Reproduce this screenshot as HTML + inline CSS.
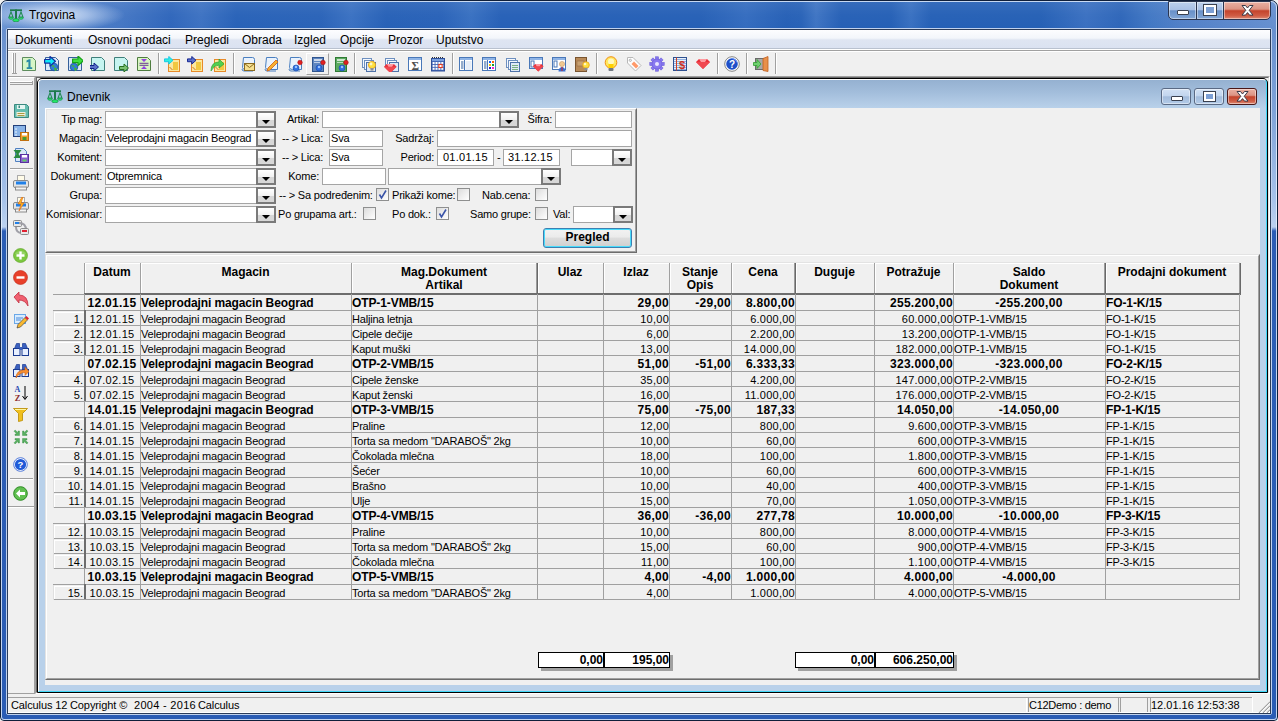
<!DOCTYPE html><html><head><meta charset="utf-8"><style>
*{box-sizing:border-box;margin:0;padding:0}
html,body{width:1278px;height:721px;overflow:hidden;background:#f2f2f2}
body{position:relative;font-family:"Liberation Sans",sans-serif;font-size:11px;color:#000}
.a{position:absolute}
.t{position:absolute;white-space:nowrap;line-height:12px}
.b{font-weight:bold;font-size:12px}
.in{position:absolute;background:#fff;border:1px solid #abadb3;border-color:#abadb3 #e3e9ef #e3e9ef #abadb3}
.in2{position:absolute;background:#fff;border:1px solid #a5a5a5}
.dd{position:absolute;width:20px;height:17px;border:2px solid #7a7a7a;background:linear-gradient(#fff,#f2f2f2 50%,#d6d6d6 51%,#d8d8d8)}
.dd:after{content:"";position:absolute;left:4px;top:7px;border-left:4px solid transparent;border-right:4px solid transparent;border-top:4px solid #000}
.cb{position:absolute;width:13px;height:13px;border:1px solid #8e8f8f;background:linear-gradient(135deg,#dcdcdc,#fff)}
.tb{position:absolute;width:16px;height:16px}
</style></head><body>
<div class="a" style="left:0;top:0;width:1278px;height:721px;border-radius:7px 7px 4px 4px;border:1px solid #0f1f3a;background:linear-gradient(90deg,#6d96d3 0,#5a88cc 20px,#4577c4 120px,#2f66bb 170px,#3d72c2 200px,#2862b8 235px,#2a63b8 320px,#3a71c2 350px,#2761b7 385px,#2962b8 440px,#3870c1 470px,#2660b7 500px,#2660b6 700px,#346cbf 745px,#2660b6 785px,#2862b7 800px,#3e74c3 815px,#2660b6 840px,#2560b6 890px,#3870c1 910px,#2560b6 930px,#2560b5 1040px,#3a70c1 1085px,#2e66b9 1120px,#4278c4 1150px,#5180c8 1180px,#6790d0 1278px)"></div>
<div class="a" style="left:1px;top:1px;width:1276px;height:28px;border-radius:6px 6px 0 0;background:linear-gradient(rgba(255,255,255,0.08),rgba(255,255,255,0.02) 50%,rgba(255,255,255,0) 100%)"></div>
<div class="a" style="left:0;top:0;width:200px;height:29px;border-radius:7px 0 0 0;background:radial-gradient(ellipse 70px 16px at 55px 15px,rgba(225,236,250,0.95) 0,rgba(200,218,244,0.7) 45%,rgba(160,190,235,0) 100%)"></div>
<div class="a" style="left:1px;top:29px;width:1276px;height:691px;background:linear-gradient(#678fce 0,#7ea2d8 80px,#a6c2ea 170px,#bcd2f0 198px,#2b5db5 202px,#2a5cb4 100%);border-radius:0 0 4px 4px"></div>
<div class="t" style="left:29px;top:8px;font-size:12px;line-height:14px;color:#000">Trgovina</div>
<div class="a" style="left:6px;top:28px;width:1266px;height:687px;border:1px solid #c0d2ee;border-radius:2px"></div>
<div class="a" style="left:7px;top:29px;width:1264px;height:685px;border:1px solid #2b3c59;background:#f0f0f0"></div>
<div class="a" style="left:1px;top:1px;width:1276px;height:719px;border:1px solid rgba(235,244,255,0.8);border-radius:6px 6px 3px 3px"></div>
<div class="a" style="left:8px;top:30px;width:1262px;height:19px;background:linear-gradient(#fdfdff 0,#f3f6fb 45%,#dfe5f2 55%,#dbe2f1 100%);border-bottom:1px solid #b9c1cf"></div>
<div class="a" style="left:8px;top:49px;width:1262px;height:1px;background:#fff"></div>
<div class="a" style="left:8px;top:50px;width:1262px;height:1px;background:#a0a0a0"></div>
<div class="a" style="left:8px;top:51px;width:1262px;height:1px;background:#fff"></div>
<div class="t" style="left:15px;top:33px;font-size:12px;line-height:14px">Dokumenti</div>
<div class="t" style="left:88px;top:33px;font-size:12px;line-height:14px">Osnovni podaci</div>
<div class="t" style="left:185px;top:33px;font-size:12px;line-height:14px">Pregledi</div>
<div class="t" style="left:242px;top:33px;font-size:12px;line-height:14px">Obrada</div>
<div class="t" style="left:294px;top:33px;font-size:12px;line-height:14px">Izgled</div>
<div class="t" style="left:340px;top:33px;font-size:12px;line-height:14px">Opcije</div>
<div class="t" style="left:388px;top:33px;font-size:12px;line-height:14px">Prozor</div>
<div class="t" style="left:436px;top:33px;font-size:12px;line-height:14px">Uputstvo</div>
<div class="a" style="left:8px;top:76px;width:1262px;height:1px;background:#a0a0a0"></div>
<div class="a" style="left:35px;top:76px;width:1235px;height:618px;border-top:1px solid #a0a0a0;border-left:1px solid #a0a0a0;border-right:1px solid #fff;border-bottom:1px solid #fff;background:#fff"></div>
<div class="a" style="left:36px;top:77px;width:1233px;height:616px;border-top:1px solid #696969;border-left:1px solid #696969;border-right:1px solid #e3e3e3;border-bottom:1px solid #fff;background:#f0f0f0"></div>
<div class="a" style="left:8px;top:77px;width:27px;height:617px;background:#f0f0f0;border-top:1px solid #fff;border-right:1px solid #a0a0a0;border-bottom:1px solid #a0a0a0"></div>
<div class="a" style="left:37px;top:78px;width:1231px;height:615px;border:1px solid #000;border-radius:5px 5px 0 0;background:#000"></div>
<div class="a" style="left:38px;top:79px;width:1229px;height:613px;border-top:1px solid #fff;border-left:1px solid #fff;border-right:1px solid #40d8f8;border-bottom:1px solid #40d8f8;border-radius:4px 4px 0 0;background:linear-gradient(#95b1d1 0,#a2bddb 12px,#b9d1ea 28px,#b9d1ea 100%)"></div>
<div class="t" style="left:67px;top:90px;font-size:12px;line-height:14px">Dnevnik</div>
<div class="a" style="left:45px;top:108px;width:1215px;height:577px;background:#f0f0f0"></div>
<div class="a" style="left:8px;top:694px;width:1262px;height:19px;background:#f0f0f0"></div>
<div class="a" style="left:8px;top:697px;width:1244px;height:1px;background:#a0a0a0"></div>
<div class="a" style="left:8px;top:712px;width:1262px;height:1px;background:#fff"></div>
<div class="a" style="left:1252px;top:697px;width:1px;height:15px;background:#fff"></div>
<div class="a" style="left:1026px;top:698px;width:1px;height:14px;background:#fff"></div>
<div class="a" style="left:1028px;top:698px;width:1px;height:14px;background:#a0a0a0"></div>
<div class="a" style="left:1118px;top:698px;width:1px;height:14px;background:#a0a0a0"></div>
<div class="a" style="left:1120px;top:698px;width:1px;height:14px;background:#a0a0a0"></div>
<div class="a" style="left:1147px;top:698px;width:1px;height:14px;background:#a0a0a0"></div>
<div class="a" style="left:1150px;top:698px;width:1px;height:14px;background:#a0a0a0"></div>
<svg class="a" style="left:1256px;top:699px" width="14" height="14"><path d="M3 14L14 3 M7 14L14 7 M11 14L14 11" stroke="#a0a0a0" stroke-width="1.2"/><path d="M4 14L14 4 M8 14L14 8 M12 14L14 12" stroke="#fff" stroke-width="0.8"/></svg>
<div class="t" style="left:11px;top:699px;letter-spacing:-0.1px">Calculus 12</div>
<div class="t" style="left:70px;top:699px;letter-spacing:-0.1px">Copyright ©</div>
<div class="t" style="left:134px;top:699px;letter-spacing:0.3px">2004 - 2016</div>
<div class="t" style="left:198px;top:699px;letter-spacing:-0.1px">Calculus</div>
<div class="t" style="left:1029px;top:699px;letter-spacing:-0.3px">C12Demo : demo</div>
<div class="t" style="left:1151px;top:699px">12.01.16 12:53:38</div>
<div class="a" style="left:45px;top:108px;width:592px;height:145px;border-top:1px solid #fff;border-left:1px solid #fff;border-right:1px solid #6d6d6d;border-bottom:1px solid #6d6d6d"></div>
<div class="a" style="left:46px;top:109px;width:590px;height:143px;border-top:1px solid #e3e3e3;border-left:1px solid #e3e3e3;border-right:1px solid #a0a0a0;border-bottom:1px solid #a0a0a0"></div>
<div class="t" style="right:1176px;top:113px;letter-spacing:-0.2px;">Tip mag:</div>
<div class="in2" style="left:105px;top:111px;width:171px;height:17px"></div>
<div class="dd" style="left:256px;top:111px"></div>
<div class="t" style="right:1176px;top:132px;letter-spacing:-0.2px;">Magacin:</div>
<div class="in2" style="left:105px;top:130px;width:171px;height:17px"></div>
<div class="t" style="left:107px;top:132px;letter-spacing:-0.2px;">Veleprodajni magacin Beograd</div>
<div class="dd" style="left:256px;top:130px"></div>
<div class="t" style="right:1176px;top:151px;letter-spacing:-0.2px;">Komitent:</div>
<div class="in2" style="left:105px;top:149px;width:171px;height:17px"></div>
<div class="dd" style="left:256px;top:149px"></div>
<div class="t" style="right:1176px;top:170px;letter-spacing:-0.2px;">Dokument:</div>
<div class="in2" style="left:105px;top:168px;width:171px;height:17px"></div>
<div class="t" style="left:107px;top:170px;letter-spacing:-0.2px;">Otpremnica</div>
<div class="dd" style="left:256px;top:168px"></div>
<div class="t" style="right:1176px;top:189px;letter-spacing:-0.2px;">Grupa:</div>
<div class="in2" style="left:105px;top:187px;width:171px;height:17px"></div>
<div class="dd" style="left:256px;top:187px"></div>
<div class="t" style="right:1176px;top:208px;letter-spacing:-0.2px;">Komisionar:</div>
<div class="in2" style="left:105px;top:206px;width:171px;height:17px"></div>
<div class="dd" style="left:256px;top:206px"></div>
<div class="t" style="right:959px;top:113px;letter-spacing:-0.2px;">Artikal:</div>
<div class="in2" style="left:322px;top:111px;width:197px;height:17px"></div>
<div class="dd" style="left:499px;top:111px"></div>
<div class="t" style="right:726px;top:113px;letter-spacing:-0.2px;">Šifra:</div>
<div class="in2" style="left:555px;top:111px;width:77px;height:17px"></div>
<div class="t" style="left:282px;top:132px;letter-spacing:-0.2px;">-- &gt; Lica:</div>
<div class="in2" style="left:329px;top:130px;width:54px;height:17px"></div>
<div class="t" style="left:331px;top:132px;letter-spacing:-0.2px;">Sva</div>
<div class="t" style="right:844px;top:132px;letter-spacing:-0.2px;">Sadržaj:</div>
<div class="in2" style="left:437px;top:130px;width:195px;height:17px"></div>
<div class="t" style="left:282px;top:151px;letter-spacing:-0.2px;">-- &gt; Lica:</div>
<div class="in2" style="left:329px;top:149px;width:54px;height:17px"></div>
<div class="t" style="left:331px;top:151px;letter-spacing:-0.2px;">Sva</div>
<div class="t" style="right:844px;top:151px;letter-spacing:-0.2px;">Period:</div>
<div class="in2" style="left:437px;top:149px;width:57px;height:17px"></div>
<div class="t" style="left:443px;top:151px;letter-spacing:0.25px;">01.01.15</div>
<div class="t" style="left:497px;top:151px;letter-spacing:-0.2px;">-</div>
<div class="in2" style="left:503px;top:149px;width:57px;height:17px"></div>
<div class="t" style="left:508px;top:151px;letter-spacing:0.25px;">31.12.15</div>
<div class="in2" style="left:571px;top:149px;width:61px;height:17px"></div>
<div class="dd" style="left:612px;top:149px"></div>
<div class="t" style="right:959px;top:170px;letter-spacing:-0.2px;">Kome:</div>
<div class="in2" style="left:322px;top:168px;width:64px;height:17px"></div>
<div class="in2" style="left:388px;top:168px;width:173px;height:17px"></div>
<div class="dd" style="left:541px;top:168px"></div>
<div class="t" style="left:279px;top:189px;letter-spacing:-0.2px;">-- &gt; Sa podređenim:</div>
<div class="cb" style="left:376px;top:188px"><svg width="11" height="11" style="position:absolute;left:0;top:0"><path d="M2.5 5.5 L4.5 9 L9 1.5" stroke="#3a54a8" stroke-width="1.6" fill="none"/></svg></div>
<div class="t" style="left:392px;top:189px;letter-spacing:-0.2px;">Prikaži kome:</div>
<div class="cb" style="left:457px;top:188px"></div>
<div class="t" style="left:482px;top:189px;letter-spacing:-0.2px;">Nab.cena:</div>
<div class="cb" style="left:535px;top:188px"></div>
<div class="t" style="left:278px;top:208px;letter-spacing:-0.2px;">Po grupama art.:</div>
<div class="cb" style="left:363px;top:207px"></div>
<div class="t" style="left:392px;top:208px;letter-spacing:-0.2px;">Po dok.:</div>
<div class="cb" style="left:436px;top:207px"><svg width="11" height="11" style="position:absolute;left:0;top:0"><path d="M2.5 5.5 L4.5 9 L9 1.5" stroke="#3a54a8" stroke-width="1.6" fill="none"/></svg></div>
<div class="t" style="left:470px;top:208px;letter-spacing:-0.2px;">Samo grupe:</div>
<div class="cb" style="left:535px;top:207px"></div>
<div class="t" style="left:553px;top:208px;letter-spacing:-0.2px;">Val:</div>
<div class="in2" style="left:573px;top:206px;width:60px;height:17px"></div>
<div class="dd" style="left:613px;top:206px"></div>
<div class="a" style="left:543px;top:228px;width:89px;height:20px;border:1px solid #3c7fb1;border-radius:3px;box-shadow:inset 0 0 0 1px #48dbfb;background:linear-gradient(#f2f2f2 0,#ebebeb 45%,#dddddd 50%,#cfcfcf 100%)"></div>
<div class="t b" style="left:543px;top:231px;width:89px;text-align:center">Pregled</div>
<div class="a" style="left:45px;top:254px;width:1215px;height:426px;border-top:1px solid #e3e3e3;border-left:1px solid #e3e3e3;border-right:1px solid #6d6d6d;border-bottom:1px solid #6d6d6d"></div>
<div class="a" style="left:46px;top:255px;width:1213px;height:424px;border-top:1px solid #fff;border-left:1px solid #fff;border-right:1px solid #a0a0a0;border-bottom:1px solid #a0a0a0"></div>
<div class="a" style="left:85px;top:262px;width:1155px;height:1px;background:#e3e3e3"></div>
<div class="a" style="left:85px;top:263px;width:1155px;height:1px;background:#fff"></div>
<div class="a" style="left:84px;top:263px;width:1px;height:31px;background:#a0a0a0"></div>
<div class="a" style="left:85px;top:263px;width:1px;height:30px;background:#fff"></div>
<div class="a" style="left:140px;top:263px;width:1px;height:31px;background:#a0a0a0"></div>
<div class="a" style="left:141px;top:263px;width:1px;height:30px;background:#fff"></div>
<div class="a" style="left:351px;top:263px;width:1px;height:31px;background:#a0a0a0"></div>
<div class="a" style="left:352px;top:263px;width:1px;height:30px;background:#fff"></div>
<div class="a" style="left:536px;top:263px;width:1px;height:31px;background:#9a9a9a"></div>
<div class="a" style="left:537px;top:263px;width:1px;height:31px;background:#696969"></div>
<div class="a" style="left:538px;top:263px;width:1px;height:30px;background:#fff"></div>
<div class="a" style="left:603px;top:263px;width:1px;height:31px;background:#a0a0a0"></div>
<div class="a" style="left:604px;top:263px;width:1px;height:30px;background:#fff"></div>
<div class="a" style="left:669px;top:263px;width:1px;height:31px;background:#a0a0a0"></div>
<div class="a" style="left:670px;top:263px;width:1px;height:30px;background:#fff"></div>
<div class="a" style="left:731px;top:263px;width:1px;height:31px;background:#a0a0a0"></div>
<div class="a" style="left:732px;top:263px;width:1px;height:30px;background:#fff"></div>
<div class="a" style="left:794px;top:263px;width:1px;height:31px;background:#9a9a9a"></div>
<div class="a" style="left:795px;top:263px;width:1px;height:31px;background:#696969"></div>
<div class="a" style="left:796px;top:263px;width:1px;height:30px;background:#fff"></div>
<div class="a" style="left:874px;top:263px;width:1px;height:31px;background:#a0a0a0"></div>
<div class="a" style="left:875px;top:263px;width:1px;height:30px;background:#fff"></div>
<div class="a" style="left:953px;top:263px;width:1px;height:31px;background:#a0a0a0"></div>
<div class="a" style="left:954px;top:263px;width:1px;height:30px;background:#fff"></div>
<div class="a" style="left:1104px;top:263px;width:1px;height:31px;background:#9a9a9a"></div>
<div class="a" style="left:1105px;top:263px;width:1px;height:31px;background:#696969"></div>
<div class="a" style="left:1106px;top:263px;width:1px;height:30px;background:#fff"></div>
<div class="a" style="left:1239px;top:263px;width:1px;height:31px;background:#9a9a9a"></div>
<div class="a" style="left:1240px;top:263px;width:1px;height:31px;background:#696969"></div>
<div class="a" style="left:84px;top:293px;width:1157px;height:2px;background:#6d6d6d"></div>
<div class="a" style="left:53px;top:294px;width:31px;height:1px;background:#a0a0a0"></div>
<div class="t b" style="left:84px;top:266px;width:56px;text-align:center;line-height:13px">Datum</div>
<div class="t b" style="left:140px;top:266px;width:211px;text-align:center;line-height:13px">Magacin</div>
<div class="t b" style="left:351px;top:266px;width:186px;text-align:center;line-height:13px">Mag.Dokument<br>Artikal</div>
<div class="t b" style="left:537px;top:266px;width:66px;text-align:center;line-height:13px">Ulaz</div>
<div class="t b" style="left:603px;top:266px;width:66px;text-align:center;line-height:13px">Izlaz</div>
<div class="t b" style="left:669px;top:266px;width:62px;text-align:center;line-height:13px">Stanje<br>Opis</div>
<div class="t b" style="left:731px;top:266px;width:64px;text-align:center;line-height:13px">Cena</div>
<div class="t b" style="left:795px;top:266px;width:79px;text-align:center;line-height:13px">Duguje</div>
<div class="t b" style="left:874px;top:266px;width:79px;text-align:center;line-height:13px">Potražuje</div>
<div class="t b" style="left:953px;top:266px;width:152px;text-align:center;line-height:13px">Saldo<br>Dokument</div>
<div class="t b" style="left:1105px;top:266px;width:134px;text-align:center;line-height:13px">Prodajni dokument</div>
<div class="a" style="left:53px;top:310px;width:1187px;height:1px;background:#a0a0a0"></div>
<div class="a" style="left:84px;top:294px;width:1px;height:16px;background:#a0a0a0"></div>
<div class="a" style="left:140px;top:294px;width:1px;height:16px;background:#a0a0a0"></div>
<div class="a" style="left:351px;top:294px;width:1px;height:16px;background:#a0a0a0"></div>
<div class="a" style="left:537px;top:294px;width:1px;height:16px;background:#a0a0a0"></div>
<div class="a" style="left:603px;top:294px;width:1px;height:16px;background:#a0a0a0"></div>
<div class="a" style="left:669px;top:294px;width:1px;height:16px;background:#a0a0a0"></div>
<div class="a" style="left:731px;top:294px;width:1px;height:16px;background:#a0a0a0"></div>
<div class="a" style="left:795px;top:294px;width:1px;height:16px;background:#a0a0a0"></div>
<div class="a" style="left:874px;top:294px;width:1px;height:16px;background:#a0a0a0"></div>
<div class="a" style="left:953px;top:294px;width:1px;height:16px;background:#a0a0a0"></div>
<div class="a" style="left:1105px;top:294px;width:1px;height:16px;background:#a0a0a0"></div>
<div class="a" style="left:1239px;top:294px;width:1px;height:16px;background:#a0a0a0"></div>
<div class="t b" style="left:84px;top:297px;width:56px;text-align:center;letter-spacing:0.3px;">12.01.15</div>
<div class="t b" style="left:141px;top:297px;letter-spacing:-0.1px;">Veleprodajni magacin Beograd</div>
<div class="t b" style="left:352px;top:297px;letter-spacing:-0.1px;">OTP-1-VMB/15</div>
<div class="t b" style="right:609px;top:297px;letter-spacing:0.3px;">29,00</div>
<div class="t b" style="right:547px;top:297px;letter-spacing:0.3px;">-29,00</div>
<div class="t b" style="right:483px;top:297px;letter-spacing:0.3px;">8.800,00</div>
<div class="t b" style="right:325px;top:297px;letter-spacing:0.3px;">255.200,00</div>
<div class="t b" style="left:953px;top:297px;width:152px;text-align:center;letter-spacing:0.3px;">-255.200,00</div>
<div class="t b" style="left:1106px;top:297px;letter-spacing:-0.1px;">FO-1-K/15</div>
<div class="a" style="left:53px;top:325px;width:1187px;height:1px;background:#a0a0a0"></div>
<div class="a" style="left:53px;top:311px;width:1px;height:15px;background:#e0e0e0"></div>
<div class="a" style="left:54px;top:312px;width:30px;height:1px;background:#fff"></div>
<div class="a" style="left:54px;top:312px;width:1px;height:13px;background:#fff"></div>
<div class="a" style="left:84px;top:310px;width:2px;height:15px;background:#6d6d6d"></div>
<div class="t" style="right:1195px;top:313px">1.</div>
<div class="a" style="left:140px;top:310px;width:1px;height:15px;background:#a0a0a0"></div>
<div class="a" style="left:351px;top:310px;width:1px;height:15px;background:#a0a0a0"></div>
<div class="a" style="left:537px;top:310px;width:1px;height:15px;background:#a0a0a0"></div>
<div class="a" style="left:603px;top:310px;width:1px;height:15px;background:#a0a0a0"></div>
<div class="a" style="left:669px;top:310px;width:1px;height:15px;background:#a0a0a0"></div>
<div class="a" style="left:731px;top:310px;width:1px;height:15px;background:#a0a0a0"></div>
<div class="a" style="left:795px;top:310px;width:1px;height:15px;background:#a0a0a0"></div>
<div class="a" style="left:874px;top:310px;width:1px;height:15px;background:#a0a0a0"></div>
<div class="a" style="left:953px;top:310px;width:1px;height:15px;background:#a0a0a0"></div>
<div class="a" style="left:1105px;top:310px;width:1px;height:15px;background:#a0a0a0"></div>
<div class="a" style="left:1239px;top:310px;width:1px;height:15px;background:#a0a0a0"></div>
<div class="t" style="left:84px;top:313px;width:56px;text-align:center;letter-spacing:0.25px;">12.01.15</div>
<div class="t" style="left:141px;top:313px;letter-spacing:-0.2px;">Veleprodajni magacin Beograd</div>
<div class="t" style="left:352px;top:313px;letter-spacing:-0.2px;">Haljina letnja</div>
<div class="t" style="right:609px;top:313px;letter-spacing:0.25px;">10,00</div>
<div class="t" style="right:483px;top:313px;letter-spacing:0.25px;">6.000,00</div>
<div class="t" style="right:325px;top:313px;letter-spacing:0.25px;">60.000,00</div>
<div class="t" style="left:954px;top:313px;letter-spacing:-0.2px;">OTP-1-VMB/15</div>
<div class="t" style="left:1106px;top:313px;letter-spacing:-0.2px;">FO-1-K/15</div>
<div class="a" style="left:53px;top:340px;width:1187px;height:1px;background:#a0a0a0"></div>
<div class="a" style="left:53px;top:326px;width:1px;height:15px;background:#e0e0e0"></div>
<div class="a" style="left:54px;top:327px;width:30px;height:1px;background:#fff"></div>
<div class="a" style="left:54px;top:327px;width:1px;height:13px;background:#fff"></div>
<div class="a" style="left:84px;top:325px;width:2px;height:15px;background:#6d6d6d"></div>
<div class="t" style="right:1195px;top:328px">2.</div>
<div class="a" style="left:140px;top:325px;width:1px;height:15px;background:#a0a0a0"></div>
<div class="a" style="left:351px;top:325px;width:1px;height:15px;background:#a0a0a0"></div>
<div class="a" style="left:537px;top:325px;width:1px;height:15px;background:#a0a0a0"></div>
<div class="a" style="left:603px;top:325px;width:1px;height:15px;background:#a0a0a0"></div>
<div class="a" style="left:669px;top:325px;width:1px;height:15px;background:#a0a0a0"></div>
<div class="a" style="left:731px;top:325px;width:1px;height:15px;background:#a0a0a0"></div>
<div class="a" style="left:795px;top:325px;width:1px;height:15px;background:#a0a0a0"></div>
<div class="a" style="left:874px;top:325px;width:1px;height:15px;background:#a0a0a0"></div>
<div class="a" style="left:953px;top:325px;width:1px;height:15px;background:#a0a0a0"></div>
<div class="a" style="left:1105px;top:325px;width:1px;height:15px;background:#a0a0a0"></div>
<div class="a" style="left:1239px;top:325px;width:1px;height:15px;background:#a0a0a0"></div>
<div class="t" style="left:84px;top:328px;width:56px;text-align:center;letter-spacing:0.25px;">12.01.15</div>
<div class="t" style="left:141px;top:328px;letter-spacing:-0.2px;">Veleprodajni magacin Beograd</div>
<div class="t" style="left:352px;top:328px;letter-spacing:-0.2px;">Cipele dečije</div>
<div class="t" style="right:609px;top:328px;letter-spacing:0.25px;">6,00</div>
<div class="t" style="right:483px;top:328px;letter-spacing:0.25px;">2.200,00</div>
<div class="t" style="right:325px;top:328px;letter-spacing:0.25px;">13.200,00</div>
<div class="t" style="left:954px;top:328px;letter-spacing:-0.2px;">OTP-1-VMB/15</div>
<div class="t" style="left:1106px;top:328px;letter-spacing:-0.2px;">FO-1-K/15</div>
<div class="a" style="left:53px;top:355px;width:1187px;height:1px;background:#a0a0a0"></div>
<div class="a" style="left:53px;top:341px;width:1px;height:15px;background:#e0e0e0"></div>
<div class="a" style="left:54px;top:342px;width:30px;height:1px;background:#fff"></div>
<div class="a" style="left:54px;top:342px;width:1px;height:13px;background:#fff"></div>
<div class="a" style="left:84px;top:340px;width:2px;height:15px;background:#6d6d6d"></div>
<div class="t" style="right:1195px;top:343px">3.</div>
<div class="a" style="left:140px;top:340px;width:1px;height:15px;background:#a0a0a0"></div>
<div class="a" style="left:351px;top:340px;width:1px;height:15px;background:#a0a0a0"></div>
<div class="a" style="left:537px;top:340px;width:1px;height:15px;background:#a0a0a0"></div>
<div class="a" style="left:603px;top:340px;width:1px;height:15px;background:#a0a0a0"></div>
<div class="a" style="left:669px;top:340px;width:1px;height:15px;background:#a0a0a0"></div>
<div class="a" style="left:731px;top:340px;width:1px;height:15px;background:#a0a0a0"></div>
<div class="a" style="left:795px;top:340px;width:1px;height:15px;background:#a0a0a0"></div>
<div class="a" style="left:874px;top:340px;width:1px;height:15px;background:#a0a0a0"></div>
<div class="a" style="left:953px;top:340px;width:1px;height:15px;background:#a0a0a0"></div>
<div class="a" style="left:1105px;top:340px;width:1px;height:15px;background:#a0a0a0"></div>
<div class="a" style="left:1239px;top:340px;width:1px;height:15px;background:#a0a0a0"></div>
<div class="t" style="left:84px;top:343px;width:56px;text-align:center;letter-spacing:0.25px;">12.01.15</div>
<div class="t" style="left:141px;top:343px;letter-spacing:-0.2px;">Veleprodajni magacin Beograd</div>
<div class="t" style="left:352px;top:343px;letter-spacing:-0.2px;">Kaput muški</div>
<div class="t" style="right:609px;top:343px;letter-spacing:0.25px;">13,00</div>
<div class="t" style="right:483px;top:343px;letter-spacing:0.25px;">14.000,00</div>
<div class="t" style="right:325px;top:343px;letter-spacing:0.25px;">182.000,00</div>
<div class="t" style="left:954px;top:343px;letter-spacing:-0.2px;">OTP-1-VMB/15</div>
<div class="t" style="left:1106px;top:343px;letter-spacing:-0.2px;">FO-1-K/15</div>
<div class="a" style="left:53px;top:371px;width:1187px;height:1px;background:#a0a0a0"></div>
<div class="a" style="left:84px;top:355px;width:1px;height:16px;background:#a0a0a0"></div>
<div class="a" style="left:140px;top:355px;width:1px;height:16px;background:#a0a0a0"></div>
<div class="a" style="left:351px;top:355px;width:1px;height:16px;background:#a0a0a0"></div>
<div class="a" style="left:537px;top:355px;width:1px;height:16px;background:#a0a0a0"></div>
<div class="a" style="left:603px;top:355px;width:1px;height:16px;background:#a0a0a0"></div>
<div class="a" style="left:669px;top:355px;width:1px;height:16px;background:#a0a0a0"></div>
<div class="a" style="left:731px;top:355px;width:1px;height:16px;background:#a0a0a0"></div>
<div class="a" style="left:795px;top:355px;width:1px;height:16px;background:#a0a0a0"></div>
<div class="a" style="left:874px;top:355px;width:1px;height:16px;background:#a0a0a0"></div>
<div class="a" style="left:953px;top:355px;width:1px;height:16px;background:#a0a0a0"></div>
<div class="a" style="left:1105px;top:355px;width:1px;height:16px;background:#a0a0a0"></div>
<div class="a" style="left:1239px;top:355px;width:1px;height:16px;background:#a0a0a0"></div>
<div class="t b" style="left:84px;top:358px;width:56px;text-align:center;letter-spacing:0.3px;">07.02.15</div>
<div class="t b" style="left:141px;top:358px;letter-spacing:-0.1px;">Veleprodajni magacin Beograd</div>
<div class="t b" style="left:352px;top:358px;letter-spacing:-0.1px;">OTP-2-VMB/15</div>
<div class="t b" style="right:609px;top:358px;letter-spacing:0.3px;">51,00</div>
<div class="t b" style="right:547px;top:358px;letter-spacing:0.3px;">-51,00</div>
<div class="t b" style="right:483px;top:358px;letter-spacing:0.3px;">6.333,33</div>
<div class="t b" style="right:325px;top:358px;letter-spacing:0.3px;">323.000,00</div>
<div class="t b" style="left:953px;top:358px;width:152px;text-align:center;letter-spacing:0.3px;">-323.000,00</div>
<div class="t b" style="left:1106px;top:358px;letter-spacing:-0.1px;">FO-2-K/15</div>
<div class="a" style="left:53px;top:386px;width:1187px;height:1px;background:#a0a0a0"></div>
<div class="a" style="left:53px;top:372px;width:1px;height:15px;background:#e0e0e0"></div>
<div class="a" style="left:54px;top:373px;width:30px;height:1px;background:#fff"></div>
<div class="a" style="left:54px;top:373px;width:1px;height:13px;background:#fff"></div>
<div class="a" style="left:84px;top:371px;width:2px;height:15px;background:#6d6d6d"></div>
<div class="t" style="right:1195px;top:374px">4.</div>
<div class="a" style="left:140px;top:371px;width:1px;height:15px;background:#a0a0a0"></div>
<div class="a" style="left:351px;top:371px;width:1px;height:15px;background:#a0a0a0"></div>
<div class="a" style="left:537px;top:371px;width:1px;height:15px;background:#a0a0a0"></div>
<div class="a" style="left:603px;top:371px;width:1px;height:15px;background:#a0a0a0"></div>
<div class="a" style="left:669px;top:371px;width:1px;height:15px;background:#a0a0a0"></div>
<div class="a" style="left:731px;top:371px;width:1px;height:15px;background:#a0a0a0"></div>
<div class="a" style="left:795px;top:371px;width:1px;height:15px;background:#a0a0a0"></div>
<div class="a" style="left:874px;top:371px;width:1px;height:15px;background:#a0a0a0"></div>
<div class="a" style="left:953px;top:371px;width:1px;height:15px;background:#a0a0a0"></div>
<div class="a" style="left:1105px;top:371px;width:1px;height:15px;background:#a0a0a0"></div>
<div class="a" style="left:1239px;top:371px;width:1px;height:15px;background:#a0a0a0"></div>
<div class="t" style="left:84px;top:374px;width:56px;text-align:center;letter-spacing:0.25px;">07.02.15</div>
<div class="t" style="left:141px;top:374px;letter-spacing:-0.2px;">Veleprodajni magacin Beograd</div>
<div class="t" style="left:352px;top:374px;letter-spacing:-0.2px;">Cipele ženske</div>
<div class="t" style="right:609px;top:374px;letter-spacing:0.25px;">35,00</div>
<div class="t" style="right:483px;top:374px;letter-spacing:0.25px;">4.200,00</div>
<div class="t" style="right:325px;top:374px;letter-spacing:0.25px;">147.000,00</div>
<div class="t" style="left:954px;top:374px;letter-spacing:-0.2px;">OTP-2-VMB/15</div>
<div class="t" style="left:1106px;top:374px;letter-spacing:-0.2px;">FO-2-K/15</div>
<div class="a" style="left:53px;top:401px;width:1187px;height:1px;background:#a0a0a0"></div>
<div class="a" style="left:53px;top:387px;width:1px;height:15px;background:#e0e0e0"></div>
<div class="a" style="left:54px;top:388px;width:30px;height:1px;background:#fff"></div>
<div class="a" style="left:54px;top:388px;width:1px;height:13px;background:#fff"></div>
<div class="a" style="left:84px;top:386px;width:2px;height:15px;background:#6d6d6d"></div>
<div class="t" style="right:1195px;top:389px">5.</div>
<div class="a" style="left:140px;top:386px;width:1px;height:15px;background:#a0a0a0"></div>
<div class="a" style="left:351px;top:386px;width:1px;height:15px;background:#a0a0a0"></div>
<div class="a" style="left:537px;top:386px;width:1px;height:15px;background:#a0a0a0"></div>
<div class="a" style="left:603px;top:386px;width:1px;height:15px;background:#a0a0a0"></div>
<div class="a" style="left:669px;top:386px;width:1px;height:15px;background:#a0a0a0"></div>
<div class="a" style="left:731px;top:386px;width:1px;height:15px;background:#a0a0a0"></div>
<div class="a" style="left:795px;top:386px;width:1px;height:15px;background:#a0a0a0"></div>
<div class="a" style="left:874px;top:386px;width:1px;height:15px;background:#a0a0a0"></div>
<div class="a" style="left:953px;top:386px;width:1px;height:15px;background:#a0a0a0"></div>
<div class="a" style="left:1105px;top:386px;width:1px;height:15px;background:#a0a0a0"></div>
<div class="a" style="left:1239px;top:386px;width:1px;height:15px;background:#a0a0a0"></div>
<div class="t" style="left:84px;top:389px;width:56px;text-align:center;letter-spacing:0.25px;">07.02.15</div>
<div class="t" style="left:141px;top:389px;letter-spacing:-0.2px;">Veleprodajni magacin Beograd</div>
<div class="t" style="left:352px;top:389px;letter-spacing:-0.2px;">Kaput ženski</div>
<div class="t" style="right:609px;top:389px;letter-spacing:0.25px;">16,00</div>
<div class="t" style="right:483px;top:389px;letter-spacing:0.25px;">11.000,00</div>
<div class="t" style="right:325px;top:389px;letter-spacing:0.25px;">176.000,00</div>
<div class="t" style="left:954px;top:389px;letter-spacing:-0.2px;">OTP-2-VMB/15</div>
<div class="t" style="left:1106px;top:389px;letter-spacing:-0.2px;">FO-2-K/15</div>
<div class="a" style="left:53px;top:417px;width:1187px;height:1px;background:#a0a0a0"></div>
<div class="a" style="left:84px;top:401px;width:1px;height:16px;background:#a0a0a0"></div>
<div class="a" style="left:140px;top:401px;width:1px;height:16px;background:#a0a0a0"></div>
<div class="a" style="left:351px;top:401px;width:1px;height:16px;background:#a0a0a0"></div>
<div class="a" style="left:537px;top:401px;width:1px;height:16px;background:#a0a0a0"></div>
<div class="a" style="left:603px;top:401px;width:1px;height:16px;background:#a0a0a0"></div>
<div class="a" style="left:669px;top:401px;width:1px;height:16px;background:#a0a0a0"></div>
<div class="a" style="left:731px;top:401px;width:1px;height:16px;background:#a0a0a0"></div>
<div class="a" style="left:795px;top:401px;width:1px;height:16px;background:#a0a0a0"></div>
<div class="a" style="left:874px;top:401px;width:1px;height:16px;background:#a0a0a0"></div>
<div class="a" style="left:953px;top:401px;width:1px;height:16px;background:#a0a0a0"></div>
<div class="a" style="left:1105px;top:401px;width:1px;height:16px;background:#a0a0a0"></div>
<div class="a" style="left:1239px;top:401px;width:1px;height:16px;background:#a0a0a0"></div>
<div class="t b" style="left:84px;top:404px;width:56px;text-align:center;letter-spacing:0.3px;">14.01.15</div>
<div class="t b" style="left:141px;top:404px;letter-spacing:-0.1px;">Veleprodajni magacin Beograd</div>
<div class="t b" style="left:352px;top:404px;letter-spacing:-0.1px;">OTP-3-VMB/15</div>
<div class="t b" style="right:609px;top:404px;letter-spacing:0.3px;">75,00</div>
<div class="t b" style="right:547px;top:404px;letter-spacing:0.3px;">-75,00</div>
<div class="t b" style="right:483px;top:404px;letter-spacing:0.3px;">187,33</div>
<div class="t b" style="right:325px;top:404px;letter-spacing:0.3px;">14.050,00</div>
<div class="t b" style="left:953px;top:404px;width:152px;text-align:center;letter-spacing:0.3px;">-14.050,00</div>
<div class="t b" style="left:1106px;top:404px;letter-spacing:-0.1px;">FP-1-K/15</div>
<div class="a" style="left:53px;top:432px;width:1187px;height:1px;background:#a0a0a0"></div>
<div class="a" style="left:53px;top:418px;width:1px;height:15px;background:#e0e0e0"></div>
<div class="a" style="left:54px;top:419px;width:30px;height:1px;background:#fff"></div>
<div class="a" style="left:54px;top:419px;width:1px;height:13px;background:#fff"></div>
<div class="a" style="left:84px;top:417px;width:2px;height:15px;background:#6d6d6d"></div>
<div class="t" style="right:1195px;top:420px">6.</div>
<div class="a" style="left:140px;top:417px;width:1px;height:15px;background:#a0a0a0"></div>
<div class="a" style="left:351px;top:417px;width:1px;height:15px;background:#a0a0a0"></div>
<div class="a" style="left:537px;top:417px;width:1px;height:15px;background:#a0a0a0"></div>
<div class="a" style="left:603px;top:417px;width:1px;height:15px;background:#a0a0a0"></div>
<div class="a" style="left:669px;top:417px;width:1px;height:15px;background:#a0a0a0"></div>
<div class="a" style="left:731px;top:417px;width:1px;height:15px;background:#a0a0a0"></div>
<div class="a" style="left:795px;top:417px;width:1px;height:15px;background:#a0a0a0"></div>
<div class="a" style="left:874px;top:417px;width:1px;height:15px;background:#a0a0a0"></div>
<div class="a" style="left:953px;top:417px;width:1px;height:15px;background:#a0a0a0"></div>
<div class="a" style="left:1105px;top:417px;width:1px;height:15px;background:#a0a0a0"></div>
<div class="a" style="left:1239px;top:417px;width:1px;height:15px;background:#a0a0a0"></div>
<div class="t" style="left:84px;top:420px;width:56px;text-align:center;letter-spacing:0.25px;">14.01.15</div>
<div class="t" style="left:141px;top:420px;letter-spacing:-0.2px;">Veleprodajni magacin Beograd</div>
<div class="t" style="left:352px;top:420px;letter-spacing:-0.2px;">Praline</div>
<div class="t" style="right:609px;top:420px;letter-spacing:0.25px;">12,00</div>
<div class="t" style="right:483px;top:420px;letter-spacing:0.25px;">800,00</div>
<div class="t" style="right:325px;top:420px;letter-spacing:0.25px;">9.600,00</div>
<div class="t" style="left:954px;top:420px;letter-spacing:-0.2px;">OTP-3-VMB/15</div>
<div class="t" style="left:1106px;top:420px;letter-spacing:-0.2px;">FP-1-K/15</div>
<div class="a" style="left:53px;top:447px;width:1187px;height:1px;background:#a0a0a0"></div>
<div class="a" style="left:53px;top:433px;width:1px;height:15px;background:#e0e0e0"></div>
<div class="a" style="left:54px;top:434px;width:30px;height:1px;background:#fff"></div>
<div class="a" style="left:54px;top:434px;width:1px;height:13px;background:#fff"></div>
<div class="a" style="left:84px;top:432px;width:2px;height:15px;background:#6d6d6d"></div>
<div class="t" style="right:1195px;top:435px">7.</div>
<div class="a" style="left:140px;top:432px;width:1px;height:15px;background:#a0a0a0"></div>
<div class="a" style="left:351px;top:432px;width:1px;height:15px;background:#a0a0a0"></div>
<div class="a" style="left:537px;top:432px;width:1px;height:15px;background:#a0a0a0"></div>
<div class="a" style="left:603px;top:432px;width:1px;height:15px;background:#a0a0a0"></div>
<div class="a" style="left:669px;top:432px;width:1px;height:15px;background:#a0a0a0"></div>
<div class="a" style="left:731px;top:432px;width:1px;height:15px;background:#a0a0a0"></div>
<div class="a" style="left:795px;top:432px;width:1px;height:15px;background:#a0a0a0"></div>
<div class="a" style="left:874px;top:432px;width:1px;height:15px;background:#a0a0a0"></div>
<div class="a" style="left:953px;top:432px;width:1px;height:15px;background:#a0a0a0"></div>
<div class="a" style="left:1105px;top:432px;width:1px;height:15px;background:#a0a0a0"></div>
<div class="a" style="left:1239px;top:432px;width:1px;height:15px;background:#a0a0a0"></div>
<div class="t" style="left:84px;top:435px;width:56px;text-align:center;letter-spacing:0.25px;">14.01.15</div>
<div class="t" style="left:141px;top:435px;letter-spacing:-0.2px;">Veleprodajni magacin Beograd</div>
<div class="t" style="left:352px;top:435px;letter-spacing:-0.2px;">Torta sa medom "DARABOŠ" 2kg</div>
<div class="t" style="right:609px;top:435px;letter-spacing:0.25px;">10,00</div>
<div class="t" style="right:483px;top:435px;letter-spacing:0.25px;">60,00</div>
<div class="t" style="right:325px;top:435px;letter-spacing:0.25px;">600,00</div>
<div class="t" style="left:954px;top:435px;letter-spacing:-0.2px;">OTP-3-VMB/15</div>
<div class="t" style="left:1106px;top:435px;letter-spacing:-0.2px;">FP-1-K/15</div>
<div class="a" style="left:53px;top:462px;width:1187px;height:1px;background:#a0a0a0"></div>
<div class="a" style="left:53px;top:448px;width:1px;height:15px;background:#e0e0e0"></div>
<div class="a" style="left:54px;top:449px;width:30px;height:1px;background:#fff"></div>
<div class="a" style="left:54px;top:449px;width:1px;height:13px;background:#fff"></div>
<div class="a" style="left:84px;top:447px;width:2px;height:15px;background:#6d6d6d"></div>
<div class="t" style="right:1195px;top:450px">8.</div>
<div class="a" style="left:140px;top:447px;width:1px;height:15px;background:#a0a0a0"></div>
<div class="a" style="left:351px;top:447px;width:1px;height:15px;background:#a0a0a0"></div>
<div class="a" style="left:537px;top:447px;width:1px;height:15px;background:#a0a0a0"></div>
<div class="a" style="left:603px;top:447px;width:1px;height:15px;background:#a0a0a0"></div>
<div class="a" style="left:669px;top:447px;width:1px;height:15px;background:#a0a0a0"></div>
<div class="a" style="left:731px;top:447px;width:1px;height:15px;background:#a0a0a0"></div>
<div class="a" style="left:795px;top:447px;width:1px;height:15px;background:#a0a0a0"></div>
<div class="a" style="left:874px;top:447px;width:1px;height:15px;background:#a0a0a0"></div>
<div class="a" style="left:953px;top:447px;width:1px;height:15px;background:#a0a0a0"></div>
<div class="a" style="left:1105px;top:447px;width:1px;height:15px;background:#a0a0a0"></div>
<div class="a" style="left:1239px;top:447px;width:1px;height:15px;background:#a0a0a0"></div>
<div class="t" style="left:84px;top:450px;width:56px;text-align:center;letter-spacing:0.25px;">14.01.15</div>
<div class="t" style="left:141px;top:450px;letter-spacing:-0.2px;">Veleprodajni magacin Beograd</div>
<div class="t" style="left:352px;top:450px;letter-spacing:-0.2px;">Čokolada mlečna</div>
<div class="t" style="right:609px;top:450px;letter-spacing:0.25px;">18,00</div>
<div class="t" style="right:483px;top:450px;letter-spacing:0.25px;">100,00</div>
<div class="t" style="right:325px;top:450px;letter-spacing:0.25px;">1.800,00</div>
<div class="t" style="left:954px;top:450px;letter-spacing:-0.2px;">OTP-3-VMB/15</div>
<div class="t" style="left:1106px;top:450px;letter-spacing:-0.2px;">FP-1-K/15</div>
<div class="a" style="left:53px;top:477px;width:1187px;height:1px;background:#a0a0a0"></div>
<div class="a" style="left:53px;top:463px;width:1px;height:15px;background:#e0e0e0"></div>
<div class="a" style="left:54px;top:464px;width:30px;height:1px;background:#fff"></div>
<div class="a" style="left:54px;top:464px;width:1px;height:13px;background:#fff"></div>
<div class="a" style="left:84px;top:462px;width:2px;height:15px;background:#6d6d6d"></div>
<div class="t" style="right:1195px;top:465px">9.</div>
<div class="a" style="left:140px;top:462px;width:1px;height:15px;background:#a0a0a0"></div>
<div class="a" style="left:351px;top:462px;width:1px;height:15px;background:#a0a0a0"></div>
<div class="a" style="left:537px;top:462px;width:1px;height:15px;background:#a0a0a0"></div>
<div class="a" style="left:603px;top:462px;width:1px;height:15px;background:#a0a0a0"></div>
<div class="a" style="left:669px;top:462px;width:1px;height:15px;background:#a0a0a0"></div>
<div class="a" style="left:731px;top:462px;width:1px;height:15px;background:#a0a0a0"></div>
<div class="a" style="left:795px;top:462px;width:1px;height:15px;background:#a0a0a0"></div>
<div class="a" style="left:874px;top:462px;width:1px;height:15px;background:#a0a0a0"></div>
<div class="a" style="left:953px;top:462px;width:1px;height:15px;background:#a0a0a0"></div>
<div class="a" style="left:1105px;top:462px;width:1px;height:15px;background:#a0a0a0"></div>
<div class="a" style="left:1239px;top:462px;width:1px;height:15px;background:#a0a0a0"></div>
<div class="t" style="left:84px;top:465px;width:56px;text-align:center;letter-spacing:0.25px;">14.01.15</div>
<div class="t" style="left:141px;top:465px;letter-spacing:-0.2px;">Veleprodajni magacin Beograd</div>
<div class="t" style="left:352px;top:465px;letter-spacing:-0.2px;">Šećer</div>
<div class="t" style="right:609px;top:465px;letter-spacing:0.25px;">10,00</div>
<div class="t" style="right:483px;top:465px;letter-spacing:0.25px;">60,00</div>
<div class="t" style="right:325px;top:465px;letter-spacing:0.25px;">600,00</div>
<div class="t" style="left:954px;top:465px;letter-spacing:-0.2px;">OTP-3-VMB/15</div>
<div class="t" style="left:1106px;top:465px;letter-spacing:-0.2px;">FP-1-K/15</div>
<div class="a" style="left:53px;top:492px;width:1187px;height:1px;background:#a0a0a0"></div>
<div class="a" style="left:53px;top:478px;width:1px;height:15px;background:#e0e0e0"></div>
<div class="a" style="left:54px;top:479px;width:30px;height:1px;background:#fff"></div>
<div class="a" style="left:54px;top:479px;width:1px;height:13px;background:#fff"></div>
<div class="a" style="left:84px;top:477px;width:2px;height:15px;background:#6d6d6d"></div>
<div class="t" style="right:1195px;top:480px">10.</div>
<div class="a" style="left:140px;top:477px;width:1px;height:15px;background:#a0a0a0"></div>
<div class="a" style="left:351px;top:477px;width:1px;height:15px;background:#a0a0a0"></div>
<div class="a" style="left:537px;top:477px;width:1px;height:15px;background:#a0a0a0"></div>
<div class="a" style="left:603px;top:477px;width:1px;height:15px;background:#a0a0a0"></div>
<div class="a" style="left:669px;top:477px;width:1px;height:15px;background:#a0a0a0"></div>
<div class="a" style="left:731px;top:477px;width:1px;height:15px;background:#a0a0a0"></div>
<div class="a" style="left:795px;top:477px;width:1px;height:15px;background:#a0a0a0"></div>
<div class="a" style="left:874px;top:477px;width:1px;height:15px;background:#a0a0a0"></div>
<div class="a" style="left:953px;top:477px;width:1px;height:15px;background:#a0a0a0"></div>
<div class="a" style="left:1105px;top:477px;width:1px;height:15px;background:#a0a0a0"></div>
<div class="a" style="left:1239px;top:477px;width:1px;height:15px;background:#a0a0a0"></div>
<div class="t" style="left:84px;top:480px;width:56px;text-align:center;letter-spacing:0.25px;">14.01.15</div>
<div class="t" style="left:141px;top:480px;letter-spacing:-0.2px;">Veleprodajni magacin Beograd</div>
<div class="t" style="left:352px;top:480px;letter-spacing:-0.2px;">Brašno</div>
<div class="t" style="right:609px;top:480px;letter-spacing:0.25px;">10,00</div>
<div class="t" style="right:483px;top:480px;letter-spacing:0.25px;">40,00</div>
<div class="t" style="right:325px;top:480px;letter-spacing:0.25px;">400,00</div>
<div class="t" style="left:954px;top:480px;letter-spacing:-0.2px;">OTP-3-VMB/15</div>
<div class="t" style="left:1106px;top:480px;letter-spacing:-0.2px;">FP-1-K/15</div>
<div class="a" style="left:53px;top:507px;width:1187px;height:1px;background:#a0a0a0"></div>
<div class="a" style="left:53px;top:493px;width:1px;height:15px;background:#e0e0e0"></div>
<div class="a" style="left:54px;top:494px;width:30px;height:1px;background:#fff"></div>
<div class="a" style="left:54px;top:494px;width:1px;height:13px;background:#fff"></div>
<div class="a" style="left:84px;top:492px;width:2px;height:15px;background:#6d6d6d"></div>
<div class="t" style="right:1195px;top:495px">11.</div>
<div class="a" style="left:140px;top:492px;width:1px;height:15px;background:#a0a0a0"></div>
<div class="a" style="left:351px;top:492px;width:1px;height:15px;background:#a0a0a0"></div>
<div class="a" style="left:537px;top:492px;width:1px;height:15px;background:#a0a0a0"></div>
<div class="a" style="left:603px;top:492px;width:1px;height:15px;background:#a0a0a0"></div>
<div class="a" style="left:669px;top:492px;width:1px;height:15px;background:#a0a0a0"></div>
<div class="a" style="left:731px;top:492px;width:1px;height:15px;background:#a0a0a0"></div>
<div class="a" style="left:795px;top:492px;width:1px;height:15px;background:#a0a0a0"></div>
<div class="a" style="left:874px;top:492px;width:1px;height:15px;background:#a0a0a0"></div>
<div class="a" style="left:953px;top:492px;width:1px;height:15px;background:#a0a0a0"></div>
<div class="a" style="left:1105px;top:492px;width:1px;height:15px;background:#a0a0a0"></div>
<div class="a" style="left:1239px;top:492px;width:1px;height:15px;background:#a0a0a0"></div>
<div class="t" style="left:84px;top:495px;width:56px;text-align:center;letter-spacing:0.25px;">14.01.15</div>
<div class="t" style="left:141px;top:495px;letter-spacing:-0.2px;">Veleprodajni magacin Beograd</div>
<div class="t" style="left:352px;top:495px;letter-spacing:-0.2px;">Ulje</div>
<div class="t" style="right:609px;top:495px;letter-spacing:0.25px;">15,00</div>
<div class="t" style="right:483px;top:495px;letter-spacing:0.25px;">70,00</div>
<div class="t" style="right:325px;top:495px;letter-spacing:0.25px;">1.050,00</div>
<div class="t" style="left:954px;top:495px;letter-spacing:-0.2px;">OTP-3-VMB/15</div>
<div class="t" style="left:1106px;top:495px;letter-spacing:-0.2px;">FP-1-K/15</div>
<div class="a" style="left:53px;top:523px;width:1187px;height:1px;background:#a0a0a0"></div>
<div class="a" style="left:84px;top:507px;width:1px;height:16px;background:#a0a0a0"></div>
<div class="a" style="left:140px;top:507px;width:1px;height:16px;background:#a0a0a0"></div>
<div class="a" style="left:351px;top:507px;width:1px;height:16px;background:#a0a0a0"></div>
<div class="a" style="left:537px;top:507px;width:1px;height:16px;background:#a0a0a0"></div>
<div class="a" style="left:603px;top:507px;width:1px;height:16px;background:#a0a0a0"></div>
<div class="a" style="left:669px;top:507px;width:1px;height:16px;background:#a0a0a0"></div>
<div class="a" style="left:731px;top:507px;width:1px;height:16px;background:#a0a0a0"></div>
<div class="a" style="left:795px;top:507px;width:1px;height:16px;background:#a0a0a0"></div>
<div class="a" style="left:874px;top:507px;width:1px;height:16px;background:#a0a0a0"></div>
<div class="a" style="left:953px;top:507px;width:1px;height:16px;background:#a0a0a0"></div>
<div class="a" style="left:1105px;top:507px;width:1px;height:16px;background:#a0a0a0"></div>
<div class="a" style="left:1239px;top:507px;width:1px;height:16px;background:#a0a0a0"></div>
<div class="t b" style="left:84px;top:510px;width:56px;text-align:center;letter-spacing:0.3px;">10.03.15</div>
<div class="t b" style="left:141px;top:510px;letter-spacing:-0.1px;">Veleprodajni magacin Beograd</div>
<div class="t b" style="left:352px;top:510px;letter-spacing:-0.1px;">OTP-4-VMB/15</div>
<div class="t b" style="right:609px;top:510px;letter-spacing:0.3px;">36,00</div>
<div class="t b" style="right:547px;top:510px;letter-spacing:0.3px;">-36,00</div>
<div class="t b" style="right:483px;top:510px;letter-spacing:0.3px;">277,78</div>
<div class="t b" style="right:325px;top:510px;letter-spacing:0.3px;">10.000,00</div>
<div class="t b" style="left:953px;top:510px;width:152px;text-align:center;letter-spacing:0.3px;">-10.000,00</div>
<div class="t b" style="left:1106px;top:510px;letter-spacing:-0.1px;">FP-3-K/15</div>
<div class="a" style="left:53px;top:538px;width:1187px;height:1px;background:#a0a0a0"></div>
<div class="a" style="left:53px;top:524px;width:1px;height:15px;background:#e0e0e0"></div>
<div class="a" style="left:54px;top:525px;width:30px;height:1px;background:#fff"></div>
<div class="a" style="left:54px;top:525px;width:1px;height:13px;background:#fff"></div>
<div class="a" style="left:84px;top:523px;width:2px;height:15px;background:#6d6d6d"></div>
<div class="t" style="right:1195px;top:526px">12.</div>
<div class="a" style="left:140px;top:523px;width:1px;height:15px;background:#a0a0a0"></div>
<div class="a" style="left:351px;top:523px;width:1px;height:15px;background:#a0a0a0"></div>
<div class="a" style="left:537px;top:523px;width:1px;height:15px;background:#a0a0a0"></div>
<div class="a" style="left:603px;top:523px;width:1px;height:15px;background:#a0a0a0"></div>
<div class="a" style="left:669px;top:523px;width:1px;height:15px;background:#a0a0a0"></div>
<div class="a" style="left:731px;top:523px;width:1px;height:15px;background:#a0a0a0"></div>
<div class="a" style="left:795px;top:523px;width:1px;height:15px;background:#a0a0a0"></div>
<div class="a" style="left:874px;top:523px;width:1px;height:15px;background:#a0a0a0"></div>
<div class="a" style="left:953px;top:523px;width:1px;height:15px;background:#a0a0a0"></div>
<div class="a" style="left:1105px;top:523px;width:1px;height:15px;background:#a0a0a0"></div>
<div class="a" style="left:1239px;top:523px;width:1px;height:15px;background:#a0a0a0"></div>
<div class="t" style="left:84px;top:526px;width:56px;text-align:center;letter-spacing:0.25px;">10.03.15</div>
<div class="t" style="left:141px;top:526px;letter-spacing:-0.2px;">Veleprodajni magacin Beograd</div>
<div class="t" style="left:352px;top:526px;letter-spacing:-0.2px;">Praline</div>
<div class="t" style="right:609px;top:526px;letter-spacing:0.25px;">10,00</div>
<div class="t" style="right:483px;top:526px;letter-spacing:0.25px;">800,00</div>
<div class="t" style="right:325px;top:526px;letter-spacing:0.25px;">8.000,00</div>
<div class="t" style="left:954px;top:526px;letter-spacing:-0.2px;">OTP-4-VMB/15</div>
<div class="t" style="left:1106px;top:526px;letter-spacing:-0.2px;">FP-3-K/15</div>
<div class="a" style="left:53px;top:553px;width:1187px;height:1px;background:#a0a0a0"></div>
<div class="a" style="left:53px;top:539px;width:1px;height:15px;background:#e0e0e0"></div>
<div class="a" style="left:54px;top:540px;width:30px;height:1px;background:#fff"></div>
<div class="a" style="left:54px;top:540px;width:1px;height:13px;background:#fff"></div>
<div class="a" style="left:84px;top:538px;width:2px;height:15px;background:#6d6d6d"></div>
<div class="t" style="right:1195px;top:541px">13.</div>
<div class="a" style="left:140px;top:538px;width:1px;height:15px;background:#a0a0a0"></div>
<div class="a" style="left:351px;top:538px;width:1px;height:15px;background:#a0a0a0"></div>
<div class="a" style="left:537px;top:538px;width:1px;height:15px;background:#a0a0a0"></div>
<div class="a" style="left:603px;top:538px;width:1px;height:15px;background:#a0a0a0"></div>
<div class="a" style="left:669px;top:538px;width:1px;height:15px;background:#a0a0a0"></div>
<div class="a" style="left:731px;top:538px;width:1px;height:15px;background:#a0a0a0"></div>
<div class="a" style="left:795px;top:538px;width:1px;height:15px;background:#a0a0a0"></div>
<div class="a" style="left:874px;top:538px;width:1px;height:15px;background:#a0a0a0"></div>
<div class="a" style="left:953px;top:538px;width:1px;height:15px;background:#a0a0a0"></div>
<div class="a" style="left:1105px;top:538px;width:1px;height:15px;background:#a0a0a0"></div>
<div class="a" style="left:1239px;top:538px;width:1px;height:15px;background:#a0a0a0"></div>
<div class="t" style="left:84px;top:541px;width:56px;text-align:center;letter-spacing:0.25px;">10.03.15</div>
<div class="t" style="left:141px;top:541px;letter-spacing:-0.2px;">Veleprodajni magacin Beograd</div>
<div class="t" style="left:352px;top:541px;letter-spacing:-0.2px;">Torta sa medom "DARABOŠ" 2kg</div>
<div class="t" style="right:609px;top:541px;letter-spacing:0.25px;">15,00</div>
<div class="t" style="right:483px;top:541px;letter-spacing:0.25px;">60,00</div>
<div class="t" style="right:325px;top:541px;letter-spacing:0.25px;">900,00</div>
<div class="t" style="left:954px;top:541px;letter-spacing:-0.2px;">OTP-4-VMB/15</div>
<div class="t" style="left:1106px;top:541px;letter-spacing:-0.2px;">FP-3-K/15</div>
<div class="a" style="left:53px;top:568px;width:1187px;height:1px;background:#a0a0a0"></div>
<div class="a" style="left:53px;top:554px;width:1px;height:15px;background:#e0e0e0"></div>
<div class="a" style="left:54px;top:555px;width:30px;height:1px;background:#fff"></div>
<div class="a" style="left:54px;top:555px;width:1px;height:13px;background:#fff"></div>
<div class="a" style="left:84px;top:553px;width:2px;height:15px;background:#6d6d6d"></div>
<div class="t" style="right:1195px;top:556px">14.</div>
<div class="a" style="left:140px;top:553px;width:1px;height:15px;background:#a0a0a0"></div>
<div class="a" style="left:351px;top:553px;width:1px;height:15px;background:#a0a0a0"></div>
<div class="a" style="left:537px;top:553px;width:1px;height:15px;background:#a0a0a0"></div>
<div class="a" style="left:603px;top:553px;width:1px;height:15px;background:#a0a0a0"></div>
<div class="a" style="left:669px;top:553px;width:1px;height:15px;background:#a0a0a0"></div>
<div class="a" style="left:731px;top:553px;width:1px;height:15px;background:#a0a0a0"></div>
<div class="a" style="left:795px;top:553px;width:1px;height:15px;background:#a0a0a0"></div>
<div class="a" style="left:874px;top:553px;width:1px;height:15px;background:#a0a0a0"></div>
<div class="a" style="left:953px;top:553px;width:1px;height:15px;background:#a0a0a0"></div>
<div class="a" style="left:1105px;top:553px;width:1px;height:15px;background:#a0a0a0"></div>
<div class="a" style="left:1239px;top:553px;width:1px;height:15px;background:#a0a0a0"></div>
<div class="t" style="left:84px;top:556px;width:56px;text-align:center;letter-spacing:0.25px;">10.03.15</div>
<div class="t" style="left:141px;top:556px;letter-spacing:-0.2px;">Veleprodajni magacin Beograd</div>
<div class="t" style="left:352px;top:556px;letter-spacing:-0.2px;">Čokolada mlečna</div>
<div class="t" style="right:609px;top:556px;letter-spacing:0.25px;">11,00</div>
<div class="t" style="right:483px;top:556px;letter-spacing:0.25px;">100,00</div>
<div class="t" style="right:325px;top:556px;letter-spacing:0.25px;">1.100,00</div>
<div class="t" style="left:954px;top:556px;letter-spacing:-0.2px;">OTP-4-VMB/15</div>
<div class="t" style="left:1106px;top:556px;letter-spacing:-0.2px;">FP-3-K/15</div>
<div class="a" style="left:53px;top:584px;width:1187px;height:1px;background:#a0a0a0"></div>
<div class="a" style="left:84px;top:568px;width:1px;height:16px;background:#a0a0a0"></div>
<div class="a" style="left:140px;top:568px;width:1px;height:16px;background:#a0a0a0"></div>
<div class="a" style="left:351px;top:568px;width:1px;height:16px;background:#a0a0a0"></div>
<div class="a" style="left:537px;top:568px;width:1px;height:16px;background:#a0a0a0"></div>
<div class="a" style="left:603px;top:568px;width:1px;height:16px;background:#a0a0a0"></div>
<div class="a" style="left:669px;top:568px;width:1px;height:16px;background:#a0a0a0"></div>
<div class="a" style="left:731px;top:568px;width:1px;height:16px;background:#a0a0a0"></div>
<div class="a" style="left:795px;top:568px;width:1px;height:16px;background:#a0a0a0"></div>
<div class="a" style="left:874px;top:568px;width:1px;height:16px;background:#a0a0a0"></div>
<div class="a" style="left:953px;top:568px;width:1px;height:16px;background:#a0a0a0"></div>
<div class="a" style="left:1105px;top:568px;width:1px;height:16px;background:#a0a0a0"></div>
<div class="a" style="left:1239px;top:568px;width:1px;height:16px;background:#a0a0a0"></div>
<div class="t b" style="left:84px;top:571px;width:56px;text-align:center;letter-spacing:0.3px;">10.03.15</div>
<div class="t b" style="left:141px;top:571px;letter-spacing:-0.1px;">Veleprodajni magacin Beograd</div>
<div class="t b" style="left:352px;top:571px;letter-spacing:-0.1px;">OTP-5-VMB/15</div>
<div class="t b" style="right:609px;top:571px;letter-spacing:0.3px;">4,00</div>
<div class="t b" style="right:547px;top:571px;letter-spacing:0.3px;">-4,00</div>
<div class="t b" style="right:483px;top:571px;letter-spacing:0.3px;">1.000,00</div>
<div class="t b" style="right:325px;top:571px;letter-spacing:0.3px;">4.000,00</div>
<div class="t b" style="left:953px;top:571px;width:152px;text-align:center;letter-spacing:0.3px;">-4.000,00</div>
<div class="a" style="left:53px;top:599px;width:1187px;height:1px;background:#a0a0a0"></div>
<div class="a" style="left:53px;top:585px;width:1px;height:15px;background:#e0e0e0"></div>
<div class="a" style="left:54px;top:586px;width:30px;height:1px;background:#fff"></div>
<div class="a" style="left:54px;top:586px;width:1px;height:13px;background:#fff"></div>
<div class="a" style="left:84px;top:584px;width:2px;height:15px;background:#6d6d6d"></div>
<div class="t" style="right:1195px;top:587px">15.</div>
<div class="a" style="left:140px;top:584px;width:1px;height:15px;background:#a0a0a0"></div>
<div class="a" style="left:351px;top:584px;width:1px;height:15px;background:#a0a0a0"></div>
<div class="a" style="left:537px;top:584px;width:1px;height:15px;background:#a0a0a0"></div>
<div class="a" style="left:603px;top:584px;width:1px;height:15px;background:#a0a0a0"></div>
<div class="a" style="left:669px;top:584px;width:1px;height:15px;background:#a0a0a0"></div>
<div class="a" style="left:731px;top:584px;width:1px;height:15px;background:#a0a0a0"></div>
<div class="a" style="left:795px;top:584px;width:1px;height:15px;background:#a0a0a0"></div>
<div class="a" style="left:874px;top:584px;width:1px;height:15px;background:#a0a0a0"></div>
<div class="a" style="left:953px;top:584px;width:1px;height:15px;background:#a0a0a0"></div>
<div class="a" style="left:1105px;top:584px;width:1px;height:15px;background:#a0a0a0"></div>
<div class="a" style="left:1239px;top:584px;width:1px;height:15px;background:#a0a0a0"></div>
<div class="t" style="left:84px;top:587px;width:56px;text-align:center;letter-spacing:0.25px;">10.03.15</div>
<div class="t" style="left:141px;top:587px;letter-spacing:-0.2px;">Veleprodajni magacin Beograd</div>
<div class="t" style="left:352px;top:587px;letter-spacing:-0.2px;">Torta sa medom "DARABOŠ" 2kg</div>
<div class="t" style="right:609px;top:587px;letter-spacing:0.25px;">4,00</div>
<div class="t" style="right:483px;top:587px;letter-spacing:0.25px;">1.000,00</div>
<div class="t" style="right:325px;top:587px;letter-spacing:0.25px;">4.000,00</div>
<div class="t" style="left:954px;top:587px;letter-spacing:-0.2px;">OTP-5-VMB/15</div>
<div class="a" style="left:541px;top:655px;width:66px;height:16px;background:#a0a0a0"></div>
<div class="a" style="left:538px;top:652px;width:66px;height:16px;background:#fff;border:1px solid #000"></div>
<div class="t b" style="right:675px;top:654px">0,00</div>
<div class="a" style="left:607px;top:655px;width:66px;height:16px;background:#a0a0a0"></div>
<div class="a" style="left:604px;top:652px;width:66px;height:16px;background:#fff;border:1px solid #000"></div>
<div class="t b" style="right:609px;top:654px">195,00</div>
<div class="a" style="left:798px;top:655px;width:80px;height:16px;background:#a0a0a0"></div>
<div class="a" style="left:795px;top:652px;width:80px;height:16px;background:#fff;border:1px solid #000"></div>
<div class="t b" style="right:404px;top:654px">0,00</div>
<div class="a" style="left:878px;top:655px;width:79px;height:16px;background:#a0a0a0"></div>
<div class="a" style="left:875px;top:652px;width:79px;height:16px;background:#fff;border:1px solid #000"></div>
<div class="t b" style="right:325px;top:654px">606.250,00</div>
<div class="a" style="left:8px;top:9px;line-height:0"><svg width="16" height="13" viewBox="0 0 16 13"><path d="M2 0.3h12v1.7h-12z" fill="#1d7a4c"/><rect x="7" y="0.5" width="2" height="10" fill="#1d7a4c"/><path d="M3 1.2L0.4 8.2Q0.4 10.6 3 10.6Q5.6 10.6 5.6 8.2Z" fill="#1f8a52"/><path d="M3 4.2L1.8 7.6h2.4z" fill="#a9c2de"/><path d="M0.6 8.6h4.8q-0.3 1.8 -2.4 1.8q-2.1 0 -2.4 -1.8z" fill="#2ad068"/><path d="M13 1.2L10.4 8.2Q10.4 10.6 13 10.6Q15.6 10.6 15.6 8.2Z" fill="#1f8a52"/><path d="M13 4.2L11.8 7.6h2.4z" fill="#a9c2de"/><path d="M10.6 8.6h4.8q-0.3 1.8 -2.4 1.8q-2.1 0 -2.4 -1.8z" fill="#2ad068"/><ellipse cx="8" cy="11.2" rx="3.2" ry="1.6" fill="#24e868" stroke="#1a7a44" stroke-width="0.6"/></svg></div>
<div class="a" style="left:47px;top:90px;line-height:0"><svg width="16" height="13" viewBox="0 0 16 13"><path d="M2 0.3h12v1.7h-12z" fill="#1d7a4c"/><rect x="7" y="0.5" width="2" height="10" fill="#1d7a4c"/><path d="M3 1.2L0.4 8.2Q0.4 10.6 3 10.6Q5.6 10.6 5.6 8.2Z" fill="#1f8a52"/><path d="M3 4.2L1.8 7.6h2.4z" fill="#a9c2de"/><path d="M0.6 8.6h4.8q-0.3 1.8 -2.4 1.8q-2.1 0 -2.4 -1.8z" fill="#2ad068"/><path d="M13 1.2L10.4 8.2Q10.4 10.6 13 10.6Q15.6 10.6 15.6 8.2Z" fill="#1f8a52"/><path d="M13 4.2L11.8 7.6h2.4z" fill="#a9c2de"/><path d="M10.6 8.6h4.8q-0.3 1.8 -2.4 1.8q-2.1 0 -2.4 -1.8z" fill="#2ad068"/><ellipse cx="8" cy="11.2" rx="3.2" ry="1.6" fill="#24e868" stroke="#1a7a44" stroke-width="0.6"/></svg></div>
<div class="a" style="left:12px;top:53px;width:1px;height:21px;background:#fff"></div>
<div class="a" style="left:13px;top:53px;width:1px;height:21px;background:#a0a0a0"></div>
<div class="a" style="left:15px;top:53px;width:1px;height:21px;background:#a0a0a0"></div>
<div class="a" style="left:12px;top:73px;width:5px;height:1px;background:#a0a0a0"></div>
<div class="a" style="left:306px;top:53px;width:23px;height:22px;border:1px solid;border-color:#fff #a0a0a0 #a0a0a0 #fff"></div>
<div class="a" style="left:21px;top:56px;line-height:0"><svg width="16" height="16" viewBox="0 0 16 16"><path d="M1.5 1.5h10l3 3v10h-13z" fill="#d6f5c6" stroke="#5e8d5e"/><path d="M5.5 4.5l2.5 -1.2h1.5v8h1.7v1.6h-5.5v-1.6h1.7v-5.6l-1.9 0.7z" fill="#2a8aa6"/></svg></div>
<div class="a" style="left:44px;top:56px;line-height:0"><svg width="16" height="16" viewBox="0 0 16 16"><path d="M1.5 1.5h10l3 3v10h-13z" fill="#dbe8f8" stroke="#36609a"/><circle cx="10" cy="11" r="3.8" fill="#2f7fd8" stroke="#1f4f9a" stroke-width="0.8"/><path d="M7.2 10q2 -2 3 0t2 2" fill="#46b040"/><path d="M10 12q2 -1 3 1l-1 2q-2 0 -2 -3z" fill="#46b040"/><path transform="translate(0,0.5) scale(1.2)" d="M0.5 2.5h4.5v-2.5l4.5 4l-4.5 4v-2.5h-4.5z" fill="#10e8f8" stroke="#1030a0" stroke-width="1" stroke-linejoin="round"/></svg></div>
<div class="a" style="left:67px;top:56px;line-height:0"><svg width="16" height="16" viewBox="0 0 16 16"><path d="M1.5 1.5h10l3 3v10h-13z" fill="#dbe8f8" stroke="#36609a"/><circle cx="7" cy="11" r="3.8" fill="#2f7fd8" stroke="#1f4f9a" stroke-width="0.8"/><path d="M4.2 10q2 -2 3 0t2 2" fill="#46b040"/><path d="M7 12q2 -1 3 1l-1 2q-2 0 -2 -3z" fill="#46b040"/><path transform="translate(5,0) scale(1.2)" d="M0.5 2.5h4.5v-2.5l4.5 4l-4.5 4v-2.5h-4.5z" fill="#40e040" stroke="#18a018" stroke-width="1" stroke-linejoin="round"/></svg></div>
<div class="a" style="left:90px;top:56px;line-height:0"><svg width="16" height="16" viewBox="0 0 16 16"><path d="M1.5 1.5h10l3 3v10h-13z" fill="#c6f4f0" stroke="#3f7f7a"/><path transform="translate(-1,7) scale(1.0)" d="M0.5 2.5h4.5v-2.5l4.5 4l-4.5 4v-2.5h-4.5z" fill="#5a72c8" stroke="#10208a" stroke-width="1" stroke-linejoin="round"/></svg></div>
<div class="a" style="left:113px;top:56px;line-height:0"><svg width="16" height="16" viewBox="0 0 16 16"><path d="M1.5 1.5h10l3 3v10h-13z" fill="#c6f4f0" stroke="#3f7f7a"/><path transform="translate(6,8) scale(1.0)" d="M0.5 2.5h4.5v-2.5l4.5 4l-4.5 4v-2.5h-4.5z" fill="#78c070" stroke="#287020" stroke-width="1" stroke-linejoin="round"/></svg></div>
<div class="a" style="left:136px;top:56px;line-height:0"><svg width="16" height="16" viewBox="0 0 16 16"><path d="M1.5 1.5h10l3 3v10h-13z" fill="#d8f5c2" stroke="#4f7d40"/><path d="M5 3h6l-3 3z M5 13h6l-3 -3z" fill="#9040e0"/><path d="M3.5 7.3h9 M3.5 9.3h9" stroke="#6a3a90" stroke-width="1"/></svg></div>
<div class="a" style="left:164px;top:56px;line-height:0"><svg width="16" height="16" viewBox="0 0 16 16"><rect x="4.5" y="3.5" width="11" height="12" fill="#fbe8a0" stroke="#e88a28"/><rect x="9" y="6" width="5" height="8" fill="#f1c840"/><path d="M5.5 11l3 3" stroke="#d07020"/><path transform="translate(0,0.5) scale(0.95)" d="M0.5 2.5h4.5v-2.5l4.5 4l-4.5 4v-2.5h-4.5z" fill="#30f0e0" stroke="#10c8e8" stroke-width="1" stroke-linejoin="round"/></svg></div>
<div class="a" style="left:187px;top:56px;line-height:0"><svg width="16" height="16" viewBox="0 0 16 16"><rect x="4.5" y="3.5" width="11" height="12" fill="#fbe8a0" stroke="#e88a28"/><rect x="9" y="6" width="5" height="8" fill="#f1c840"/><path d="M5.5 11l3 3" stroke="#d07020"/><path transform="translate(0,0.5) scale(0.95)" d="M0.5 2.5h4.5v-2.5l4.5 4l-4.5 4v-2.5h-4.5z" fill="#5a70c8" stroke="#0e2090" stroke-width="1" stroke-linejoin="round"/></svg></div>
<div class="a" style="left:210px;top:56px;line-height:0"><svg width="16" height="16" viewBox="0 0 16 16"><rect x="4.5" y="3.5" width="11" height="12" fill="#fbe8a0" stroke="#e88a28"/><rect x="9" y="6" width="5" height="8" fill="#f1c840"/><path d="M5.5 11l3 3" stroke="#d07020"/><path d="M1 15q0 -9 8 -9v-3l5 5l-5 4v-3q-5 0 -8 6z" fill="#50d050" stroke="#30a030" stroke-width="0.7"/></svg></div>
<div class="a" style="left:240px;top:56px;line-height:0"><svg width="16" height="16" viewBox="0 0 16 16"><path d="M3.5 1.5h9q2 0 2 2v10h-9q-3 0 -3 -2z" fill="#eaf2fc" stroke="#4a7fc0"/><path d="M2 13q0 2 2 2h9" stroke="#4a7fc0" fill="none"/><rect x="4.5" y="7.5" width="10" height="7" fill="#f6e090" stroke="#8a6a20"/><path d="M4.5 7.5l5 4l5 -4" fill="none" stroke="#8a6a20"/></svg></div>
<div class="a" style="left:263px;top:56px;line-height:0"><svg width="16" height="16" viewBox="0 0 16 16"><path d="M3.5 1.5h9q2 0 2 2v10h-9q-3 0 -3 -2z" fill="#eaf2fc" stroke="#4a7fc0"/><path d="M2 13q0 2 2 2h9" stroke="#4a7fc0" fill="none"/><path d="M4 15l1 -3l8 -8l2 2l-8 8z" fill="#f8b030" stroke="#d06010" stroke-width="0.8"/></svg></div>
<div class="a" style="left:287px;top:56px;line-height:0"><svg width="16" height="16" viewBox="0 0 16 16"><path d="M3.5 1.5h9q2 0 2 2v10h-9q-3 0 -3 -2z" fill="#eaf2fc" stroke="#4a7fc0"/><path d="M2 13q0 2 2 2h9" stroke="#4a7fc0" fill="none"/><circle cx="9" cy="12" r="3" fill="#2f6fe0" stroke="#1b4aa8" stroke-width="0.6"/><circle cx="9" cy="11" r="1.2" fill="#9cc4ff"/><circle cx="13" cy="6.5" r="2.3" fill="#e02020" stroke="#a01010" stroke-width="0.5"/></svg></div>
<div class="a" style="left:310px;top:56px;line-height:0"><svg width="16" height="16" viewBox="0 0 16 16"><rect x="2.5" y="1.5" width="11" height="14" fill="#5f86c0" stroke="#2f558f"/><rect x="4" y="3" width="8" height="2" fill="#fff" opacity="0.7"/><rect x="4" y="6" width="6" height="1" fill="#fff" opacity="0.6"/><circle cx="9" cy="12" r="3" fill="#2f6fe0" stroke="#1b4aa8" stroke-width="0.6"/><circle cx="9" cy="11" r="1.2" fill="#9cc4ff"/><circle cx="13" cy="6.5" r="2.3" fill="#e02020" stroke="#a01010" stroke-width="0.5"/></svg></div>
<div class="a" style="left:333px;top:56px;line-height:0"><svg width="16" height="16" viewBox="0 0 16 16"><rect x="2.5" y="1.5" width="11" height="14" fill="#5aaa60" stroke="#2f7a34"/><rect x="4" y="3" width="8" height="2" fill="#fff" opacity="0.7"/><rect x="4" y="6" width="6" height="1" fill="#fff" opacity="0.6"/><circle cx="9" cy="12" r="3" fill="#2f6fe0" stroke="#1b4aa8" stroke-width="0.6"/><circle cx="9" cy="11" r="1.2" fill="#9cc4ff"/><circle cx="13" cy="6.5" r="2.3" fill="#e02020" stroke="#a01010" stroke-width="0.5"/></svg></div>
<div class="a" style="left:361px;top:56px;line-height:0"><svg width="16" height="16" viewBox="0 0 16 16"><rect x="1.5" y="2.5" width="9" height="9" fill="#f4f8fe" stroke="#6d8fbf"/><rect x="3.5" y="4.5" width="9" height="9" fill="#f4f8fe" stroke="#6d8fbf"/><rect x="5.5" y="6.5" width="9" height="9" fill="#dfe9f7" stroke="#4e72a8"/><circle cx="11" cy="9" r="3.6" fill="#ffe040" stroke="#e8a010" stroke-width="0.8"/><circle cx="10" cy="8" r="1.44" fill="#fff7c0"/><rect x="9.5" y="12.1" width="3" height="2.5" fill="#8a8f98"/></svg></div>
<div class="a" style="left:384px;top:56px;line-height:0"><svg width="16" height="16" viewBox="0 0 16 16"><rect x="1.5" y="2.5" width="9" height="9" fill="#f4f8fe" stroke="#6d8fbf"/><rect x="3.5" y="4.5" width="9" height="9" fill="#f4f8fe" stroke="#6d8fbf"/><rect x="5.5" y="6.5" width="9" height="9" fill="#dfe9f7" stroke="#4e72a8"/><g transform="translate(0,8) scale(0.9)"><path d="M0 3l3 -3h8l3 3l-7 7z" fill="#e8303a"/><path d="M0 3h14l-7 7z" fill="#f04850"/><path d="M3 0l2 3h4l2 -3" fill="#ff9aa0"/></g></svg></div>
<div class="a" style="left:407px;top:56px;line-height:0"><svg width="16" height="16" viewBox="0 0 16 16"><rect x="1.5" y="1.5" width="13" height="13" fill="#fff" stroke="#4a78b8"/><rect x="2.0" y="2.0" width="12" height="2" fill="#8fb4e6"/><text x="8.2" y="13.8" font-family="Liberation Serif" font-weight="bold" font-size="11.5" text-anchor="middle" fill="#505050">Σ</text></svg></div>
<div class="a" style="left:430px;top:56px;line-height:0"><svg width="16" height="16" viewBox="0 0 16 16"><rect x="1.5" y="2.5" width="13" height="12.5" fill="#4468b8" stroke="#2f4f98"/><rect x="2" y="3" width="12" height="2" fill="#7aa0e0"/><rect x="2.6" y="6.0" width="2" height="2" fill="#fff"/><rect x="2.6" y="8.9" width="2" height="2" fill="#fff"/><rect x="2.6" y="11.8" width="2" height="2" fill="#fff"/><rect x="5.5" y="6.0" width="2" height="2" fill="#fff"/><rect x="5.5" y="8.9" width="2" height="2" fill="#fff"/><rect x="5.5" y="11.8" width="2" height="2" fill="#fff"/><rect x="8.4" y="6.0" width="2" height="2" fill="#fff"/><rect x="8.4" y="8.9" width="2" height="2" fill="#fff"/><rect x="8.4" y="11.8" width="2" height="2" fill="#fff"/><rect x="11.299999999999999" y="6.0" width="2" height="2" fill="#fff"/><rect x="11.299999999999999" y="8.9" width="2" height="2" fill="#fff"/><rect x="11.299999999999999" y="11.8" width="2" height="2" fill="#fff"/><rect x="8.9" y="8.4" width="3.2" height="3.2" fill="#fff" stroke="#e83010" stroke-width="1"/><path d="M2 1.5h12" stroke="#333" stroke-dasharray="1 1"/></svg></div>
<div class="a" style="left:458px;top:56px;line-height:0"><svg width="16" height="16" viewBox="0 0 16 16"><rect x="1.5" y="1.5" width="13" height="13" fill="#fff" stroke="#4a78b8"/><rect x="2.0" y="2.0" width="12" height="2" fill="#8fb4e6"/><path d="M6.5 4v10" stroke="#4a78b8"/><rect x="3" y="5.5" width="2.5" height="1" fill="#2a5a9a"/><rect x="3" y="7.5" width="2.5" height="1" fill="#2a5a9a"/><rect x="3" y="9.5" width="2.5" height="1" fill="#2a5a9a"/><rect x="3" y="11.5" width="2.5" height="1" fill="#2a5a9a"/><rect x="7.5" y="5" width="6" height="9" fill="#e6edf7"/></svg></div>
<div class="a" style="left:481px;top:56px;line-height:0"><svg width="16" height="16" viewBox="0 0 16 16"><rect x="1.5" y="1.5" width="13" height="13" fill="#fff" stroke="#4a78b8"/><rect x="2.0" y="2.0" width="12" height="2" fill="#8fb4e6"/><path d="M6.5 4v10" stroke="#4a78b8"/><rect x="3" y="5.5" width="2.5" height="1" fill="#2a5a9a"/><rect x="3" y="7.5" width="2.5" height="1" fill="#2a5a9a"/><rect x="3" y="9.5" width="2.5" height="1" fill="#2a5a9a"/><rect x="3" y="11.5" width="2.5" height="1" fill="#2a5a9a"/><rect x="8" y="5" width="2" height="2" fill="#1060f0"/><rect x="11" y="5" width="2" height="2" fill="#ff6000"/><rect x="8" y="8" width="2" height="2" fill="#f0c000"/><rect x="11" y="8" width="2" height="2" fill="#10a030"/><rect x="8" y="11" width="2" height="2" fill="#2020c0"/><rect x="11" y="11" width="2" height="2" fill="#f020d0"/></svg></div>
<div class="a" style="left:505px;top:56px;line-height:0"><svg width="16" height="16" viewBox="0 0 16 16"><rect x="1.5" y="2.5" width="9" height="9" fill="#f4f8fe" stroke="#6d8fbf"/><rect x="3.5" y="4.5" width="9" height="9" fill="#f4f8fe" stroke="#6d8fbf"/><rect x="5.5" y="6.5" width="9" height="9" fill="#dfe9f7" stroke="#4e72a8"/><path d="M7 9.5h6 M7 11.5h6 M7 13.5h6" stroke="#60a060" stroke-width="0.8"/></svg></div>
<div class="a" style="left:528px;top:56px;line-height:0"><svg width="16" height="16" viewBox="0 0 16 16"><rect x="1.5" y="1.5" width="13" height="11" fill="#fff" stroke="#4a78b8"/><rect x="2.0" y="2.0" width="12" height="2" fill="#8fb4e6"/><rect x="3" y="5" width="3" height="6" fill="none" stroke="#4a78b8"/><g transform="translate(5,8) scale(0.75)"><path d="M0 3l3 -3h8l3 3l-7 7z" fill="#e8303a"/><path d="M0 3h14l-7 7z" fill="#f04850"/><path d="M3 0l2 3h4l2 -3" fill="#ff9aa0"/></g></svg></div>
<div class="a" style="left:551px;top:56px;line-height:0"><svg width="16" height="16" viewBox="0 0 16 16"><rect x="1.5" y="1.5" width="13" height="12" fill="#fff" stroke="#4a78b8"/><rect x="2.0" y="2.0" width="12" height="2" fill="#8fb4e6"/><rect x="3" y="5" width="3" height="6" fill="none" stroke="#4a78b8"/><circle cx="11" cy="8" r="2.6" fill="#f0c890" stroke="#c09060" stroke-width="0.5"/><path d="M7.5 15.5q0 -4 3.5 -4.5q3.5 0.5 3.5 4.5z" fill="#3a6fd0"/><path d="M11 11v4" stroke="#d02020"/></svg></div>
<div class="a" style="left:574px;top:56px;line-height:0"><svg width="16" height="16" viewBox="0 0 16 16"><rect x="1.5" y="1.5" width="11" height="14" fill="#b88a58" stroke="#7a5530"/><rect x="3" y="5" width="7" height="5" fill="#c8a070" stroke="#8a6540" stroke-width="0.5"/><circle cx="12" cy="9" r="3.3" fill="#ffe040" stroke="#e8a010" stroke-width="0.8"/><circle cx="11" cy="8" r="1.3199999999999998" fill="#fff7c0"/><rect x="10.5" y="11.8" width="3" height="2.5" fill="#8a8f98"/></svg></div>
<div class="a" style="left:603px;top:56px;line-height:0"><svg width="16" height="16" viewBox="0 0 16 16"><circle cx="8" cy="6.5" r="5.8" fill="#ffe860" stroke="#f09010" stroke-width="1"/><circle cx="8" cy="5.5" r="3" fill="#fff8c0"/><rect x="5.5" y="8" width="5" height="4" fill="#ffd000"/><rect x="5.5" y="12" width="5" height="3" rx="1" fill="#707880"/></svg></div>
<div class="a" style="left:626px;top:56px;line-height:0"><svg width="16" height="16" viewBox="0 0 16 16"><path d="M1.5 7V1.5H7L15 9.5L9.5 15Z" fill="#fdfdfd" stroke="#b8b8b8"/><path d="M5.5 8L8 5.5L12.5 10L10 12.5Z" fill="#ff9a6a"/><circle cx="4.3" cy="4.3" r="1.1" fill="none" stroke="#9a9a9a" stroke-width="0.7"/></svg></div>
<div class="a" style="left:649px;top:56px;line-height:0"><svg width="16" height="16" viewBox="0 0 16 16"><g fill="#8878f0" stroke="#6a5ad8" stroke-width="0.6"><rect x="6.5" y="0.8" width="3" height="4" transform="rotate(0 8 8)"/><rect x="6.5" y="0.8" width="3" height="4" transform="rotate(45 8 8)"/><rect x="6.5" y="0.8" width="3" height="4" transform="rotate(90 8 8)"/><rect x="6.5" y="0.8" width="3" height="4" transform="rotate(135 8 8)"/><rect x="6.5" y="0.8" width="3" height="4" transform="rotate(180 8 8)"/><rect x="6.5" y="0.8" width="3" height="4" transform="rotate(225 8 8)"/><rect x="6.5" y="0.8" width="3" height="4" transform="rotate(270 8 8)"/><rect x="6.5" y="0.8" width="3" height="4" transform="rotate(315 8 8)"/><circle cx="8" cy="8" r="5"/></g><circle cx="8" cy="8" r="2" fill="#e8e4ff"/></svg></div>
<div class="a" style="left:672px;top:56px;line-height:0"><svg width="16" height="16" viewBox="0 0 16 16"><rect x="1.5" y="1.5" width="13" height="13" fill="#e8f0fa" stroke="#2e5090"/><path d="M2 3.5h12" stroke="#7aa0d8" stroke-width="0.8"/><path d="M2 5.5h12" stroke="#7aa0d8" stroke-width="0.8"/><path d="M2 7.5h12" stroke="#7aa0d8" stroke-width="0.8"/><path d="M2 9.5h12" stroke="#7aa0d8" stroke-width="0.8"/><path d="M2 11.5h12" stroke="#7aa0d8" stroke-width="0.8"/><path d="M2 13.5h12" stroke="#7aa0d8" stroke-width="0.8"/><path d="M4.5 1.5v13" stroke="#d04020"/><text x="10" y="13" font-family="Liberation Sans" font-weight="bold" font-size="11" text-anchor="middle" fill="#d03020">$</text></svg></div>
<div class="a" style="left:695px;top:56px;line-height:0"><svg width="16" height="16" viewBox="0 0 16 16"><g transform="translate(1,3) scale(1.0)"><path d="M0 3l3 -3h8l3 3l-7 7z" fill="#e8303a"/><path d="M0 3h14l-7 7z" fill="#f04850"/><path d="M3 0l2 3h4l2 -3" fill="#ff9aa0"/></g></svg></div>
<div class="a" style="left:724px;top:56px;line-height:0"><svg width="16" height="16" viewBox="0 0 16 16"><circle cx="8" cy="8" r="7.3" fill="#fff" stroke="#777" stroke-width="0.9"/><circle cx="8" cy="8" r="5.8" fill="#1f4fc8"/><path d="M8 2.5a5.5 5.5 0 0 1 5 4" stroke="#5f8fff" fill="none"/><text x="8" y="11.8" font-family="Liberation Sans" font-weight="bold" font-size="10" text-anchor="middle" fill="#fff">?</text></svg></div>
<div class="a" style="left:753px;top:56px;line-height:0"><svg width="16" height="16" viewBox="0 0 16 16"><rect x="2.5" y="2.5" width="8" height="11" fill="#a8a8a8" stroke="#6a6a6a"/><path d="M10 2.5l5 -2v15l-5 -1z" fill="#e8904a" stroke="#c06020" stroke-width="0.8"/><path d="M0.5 6.5h3.5v-3l4 4.5l-4 4.5v-3h-3.5z" fill="#70d070" stroke="#30a030" stroke-width="0.8"/></svg></div>
<div class="a" style="left:158px;top:53px;width:1px;height:21px;background:#a0a0a0"></div>
<div class="a" style="left:159px;top:53px;width:1px;height:21px;background:#fff"></div>
<div class="a" style="left:233px;top:53px;width:1px;height:21px;background:#a0a0a0"></div>
<div class="a" style="left:234px;top:53px;width:1px;height:21px;background:#fff"></div>
<div class="a" style="left:354px;top:53px;width:1px;height:21px;background:#a0a0a0"></div>
<div class="a" style="left:355px;top:53px;width:1px;height:21px;background:#fff"></div>
<div class="a" style="left:452px;top:53px;width:1px;height:21px;background:#a0a0a0"></div>
<div class="a" style="left:453px;top:53px;width:1px;height:21px;background:#fff"></div>
<div class="a" style="left:596px;top:53px;width:1px;height:21px;background:#a0a0a0"></div>
<div class="a" style="left:597px;top:53px;width:1px;height:21px;background:#fff"></div>
<div class="a" style="left:717px;top:53px;width:1px;height:21px;background:#a0a0a0"></div>
<div class="a" style="left:718px;top:53px;width:1px;height:21px;background:#fff"></div>
<div class="a" style="left:746px;top:53px;width:1px;height:21px;background:#a0a0a0"></div>
<div class="a" style="left:747px;top:53px;width:1px;height:21px;background:#fff"></div>
<div class="a" style="left:775px;top:53px;width:1px;height:21px;background:#a0a0a0"></div>
<div class="a" style="left:776px;top:53px;width:1px;height:21px;background:#fff"></div>
<div class="a" style="left:10px;top:81px;width:23px;height:1px;background:#fff"></div>
<div class="a" style="left:10px;top:82px;width:23px;height:1px;background:#a0a0a0"></div>
<div class="a" style="left:10px;top:84px;width:23px;height:1px;background:#a0a0a0"></div>
<div class="a" style="left:32px;top:81px;width:1px;height:4px;background:#a0a0a0"></div>
<div class="a" style="left:13px;top:103px;line-height:0"><svg width="16" height="16" viewBox="0 0 16 16"><path d="M1.5 1.5h12l2 2v11h-14z" fill="#66bdb0" stroke="#3b8a80"/><rect x="4" y="2" width="8" height="4" fill="#e6f6f2"/><rect x="5.5" y="2.5" width="1.5" height="2.5" fill="#3b8a80"/><rect x="3.5" y="9" width="9" height="4.5" fill="#f0f0e0"/><path d="M4.5 10.5h7 M4.5 12.5h7" stroke="#a89a40"/></svg></div>
<div class="a" style="left:13px;top:125px;line-height:0"><svg width="16" height="16" viewBox="0 0 16 16"><rect x="0.5" y="0.5" width="12" height="11" fill="#8ab4e8" stroke="#24407a"/><circle cx="3" cy="4" r="0.8" fill="#fff"/><circle cx="3" cy="7" r="0.8" fill="#fff"/><circle cx="3" cy="10" r="0.8" fill="#fff"/><rect x="7.5" y="7.5" width="8" height="8" fill="#f0a030" stroke="#c07010"/><rect x="9" y="8" width="5" height="2.5" fill="#fff"/><rect x="9.5" y="12" width="4" height="3" fill="#4a9a30"/></svg></div>
<div class="a" style="left:13px;top:147px;line-height:0"><svg width="16" height="16" viewBox="0 0 16 16"><path d="M2.5 1.5h8l3 3v10h-11z" fill="#d8e8f8" stroke="#5080c0"/><path d="M0.5 3h8l-3 4l3 4h-8l3 -4z" fill="#2a8a40"/><rect x="7.5" y="7.5" width="8" height="8" fill="#8a60d0" stroke="#5a30a0"/><rect x="9" y="8" width="5" height="2.5" fill="#fff"/><rect x="9.5" y="12.5" width="4" height="2" fill="#60d060"/></svg></div>
<div class="a" style="left:13px;top:175px;line-height:0"><svg width="16" height="16" viewBox="0 0 16 16"><rect x="4.5" y="0.5" width="7" height="6" fill="#fffbe8" stroke="#aaa"/><rect x="0.5" y="5.5" width="15" height="7" rx="1.5" fill="#e4e4e4" stroke="#8a8a8a"/><rect x="3" y="6.5" width="10" height="3" fill="#2080e8"/><rect x="2.5" y="12" width="11" height="3" fill="#f4f4f4" stroke="#8a8a8a"/></svg></div>
<div class="a" style="left:13px;top:197px;line-height:0"><svg width="16" height="16" viewBox="0 0 16 16"><rect x="4.5" y="0.5" width="7" height="6" fill="#fffbe8" stroke="#aaa"/><rect x="0.5" y="5.5" width="15" height="7" rx="1.5" fill="#e4e4e4" stroke="#8a8a8a"/><rect x="3" y="6.5" width="10" height="3" fill="#2080e8"/><rect x="2.5" y="12" width="11" height="3" fill="#f4f4f4" stroke="#8a8a8a"/><path d="M9 0l-4 7h3l-2 7l5 -8h-3l2 -6z" fill="#ffc020" stroke="#e06010" stroke-width="0.6"/></svg></div>
<div class="a" style="left:13px;top:219px;line-height:0"><svg width="16" height="16" viewBox="0 0 16 16"><rect x="0.5" y="1.5" width="8" height="6" rx="1" fill="#e8e8e8" stroke="#8a8a8a"/><rect x="2" y="3" width="5" height="2" fill="#2080e8"/><path d="M6 4q7 0 7 7" stroke="#a0a0a8" stroke-width="2" fill="none"/><path d="M3 8q0 6 6 6" stroke="#a0a0a8" stroke-width="2" fill="none"/><rect x="7.5" y="9.5" width="8" height="6" rx="1" fill="#e8e8e8" stroke="#8a8a8a"/><rect x="9" y="11" width="5" height="2" fill="#e02030"/></svg></div>
<div class="a" style="left:13px;top:248px;line-height:0"><svg width="16" height="16" viewBox="0 0 16 16"><circle cx="7.5" cy="7.5" r="7" fill="#7cc840" stroke="#5aa020" stroke-width="0.6"/><path d="M7.5 3.5v8 M3.5 7.5h8" stroke="#fff" stroke-width="2.4"/><path d="M2 6a6 5 0 0 1 11 0" fill="#fff" opacity="0.2"/></svg></div>
<div class="a" style="left:13px;top:270px;line-height:0"><svg width="16" height="16" viewBox="0 0 16 16"><circle cx="7.5" cy="7.5" r="7" fill="#e8402a" stroke="#c02818" stroke-width="0.6"/><path d="M3.5 7.5h8" stroke="#fff" stroke-width="2.4"/></svg></div>
<div class="a" style="left:13px;top:291px;line-height:0"><svg width="16" height="16" viewBox="0 0 16 16"><path d="M1 6l5 -5v3q9 0 9 11q-3 -6 -9 -6v3z" fill="#f06070" stroke="#c03040" stroke-width="0.8"/></svg></div>
<div class="a" style="left:13px;top:313px;line-height:0"><svg width="16" height="16" viewBox="0 0 16 16"><rect x="1.5" y="1.5" width="11" height="9" fill="#d8ecff" stroke="#6aa8e8"/><path d="M3 5h7 M3 7h5" stroke="#4a8ad8"/><path d="M4 15l1 -3.5l7 -7l2.5 2.5l-7 7z" fill="#f8b830" stroke="#303030" stroke-width="0.6"/><path d="M12 4.5l1.5 -1.5l2.5 2.5l-1.5 1.5z" fill="#e02030"/></svg></div>
<div class="a" style="left:13px;top:342px;line-height:0"><svg width="16" height="16" viewBox="0 0 16 16"><path d="M1.5 6.5l2 -5h3v5z M9.5 6.5v-5h3l2 5z" fill="#3a60c0" stroke="#1a3a90" stroke-width="0.7"/><rect x="0.5" y="6.5" width="6.5" height="7" fill="#e8f0ff" stroke="#1a3a90"/><rect x="9" y="6.5" width="6.5" height="7" fill="#e8f0ff" stroke="#1a3a90"/><rect x="6.5" y="5" width="3" height="3" fill="#3a60c0"/></svg></div>
<div class="a" style="left:13px;top:363px;line-height:0"><svg width="16" height="16" viewBox="0 0 16 16"><path d="M1.5 6.5l2 -5h3v5z M9.5 6.5v-5h3l2 5z" fill="#3a60c0" stroke="#1a3a90" stroke-width="0.7"/><rect x="0.5" y="6.5" width="6.5" height="7" fill="#e8f0ff" stroke="#1a3a90"/><rect x="9" y="6.5" width="6.5" height="7" fill="#e8f0ff" stroke="#1a3a90"/><path d="M3 15q0 -8 9 -8v-3l4 4.5l-4 4v-3q-6 0 -9 5.5z" fill="#f89030" stroke="#d06010" stroke-width="0.6"/></svg></div>
<div class="a" style="left:13px;top:385px;line-height:0"><svg width="16" height="16" viewBox="0 0 16 16"><text x="4.5" y="7" font-family="Liberation Serif" font-weight="bold" font-size="8" text-anchor="middle" fill="#2a4ab0">A</text><text x="4.5" y="15.5" font-family="Liberation Serif" font-weight="bold" font-size="8.5" text-anchor="middle" fill="#8a2a2a">Z</text><path d="M12 1v13" stroke="#000" stroke-width="1"/><path d="M9.5 11l2.5 3.5l2.5 -3.5" stroke="#000" fill="none"/></svg></div>
<div class="a" style="left:13px;top:407px;line-height:0"><svg width="16" height="16" viewBox="0 0 16 16"><path d="M0.5 1.5h14l-5 5v7l-4 1v-8z" fill="#f0c020" stroke="#b88a00" stroke-width="0.8"/><path d="M2 2.5h11" stroke="#fff8a0"/></svg></div>
<div class="a" style="left:13px;top:429px;line-height:0"><svg width="16" height="16" viewBox="0 0 16 16"><g fill="#56b060" stroke="#3a8a44" stroke-width="0.4"><path transform="" d="M1 2.2L2.2 1L5 3.8V2H6.5V6.5H2V5H3.8Z"/><path transform="translate(16 0) scale(-1 1)" d="M1 2.2L2.2 1L5 3.8V2H6.5V6.5H2V5H3.8Z"/><path transform="translate(0 16) scale(1 -1)" d="M1 2.2L2.2 1L5 3.8V2H6.5V6.5H2V5H3.8Z"/><path transform="translate(16 16) scale(-1 -1)" d="M1 2.2L2.2 1L5 3.8V2H6.5V6.5H2V5H3.8Z"/></g></svg></div>
<div class="a" style="left:13px;top:457px;line-height:0"><svg width="16" height="16" viewBox="0 0 16 16"><circle cx="7.5" cy="7.5" r="6.8" fill="#fff" stroke="#2a5ad0" stroke-width="0.8"/><circle cx="7.5" cy="7.5" r="5.6" fill="#1f5ad8"/><text x="7.5" y="11.3" font-family="Liberation Sans" font-weight="bold" font-size="9.5" text-anchor="middle" fill="#fff">?</text></svg></div>
<div class="a" style="left:13px;top:486px;line-height:0"><svg width="16" height="16" viewBox="0 0 16 16"><circle cx="7.5" cy="7.5" r="6.8" fill="#60c050" stroke="#2a8a20" stroke-width="1"/><path d="M3 7.5l4 -4v2.5h5v3h-5v2.5z" fill="#fff"/></svg></div>
<div class="a" style="left:8px;top:506px;width:27px;height:1px;background:#a0a0a0"></div>
<div class="a" style="left:8px;top:507px;width:26px;height:1px;background:#fff"></div>
<div class="a" style="left:10px;top:168px;width:23px;height:1px;background:#a0a0a0"></div>
<div class="a" style="left:10px;top:169px;width:23px;height:1px;background:#fff"></div>
<div class="a" style="left:10px;top:478px;width:23px;height:1px;background:#a0a0a0"></div>
<div class="a" style="left:10px;top:479px;width:23px;height:1px;background:#fff"></div>
<div class="a" style="left:1168px;top:1px;width:29px;height:19px;background:linear-gradient(#bcd0ec 0,#a9c0e4 45%,#6890c8 52%,#82a6d6 100%);border:1px solid #2a3550;border-radius:0 0 0 5px;box-shadow:inset 0 0 0 1px rgba(255,255,255,0.45)"></div>
<div class="a" style="left:1196px;top:1px;width:28px;height:19px;background:linear-gradient(#bcd0ec 0,#a9c0e4 45%,#6890c8 52%,#82a6d6 100%);border:1px solid #2a3550;border-radius:0;box-shadow:inset 0 0 0 1px rgba(255,255,255,0.45)"></div>
<div class="a" style="left:1223px;top:1px;width:48px;height:19px;background:linear-gradient(#eab0a2 0,#dc9484 42%,#c4442c 52%,#cf5c44 80%,#dc8a74 100%);border:1px solid #2a3550;border-radius:0 0 5px 0;box-shadow:inset 0 0 0 1px rgba(255,255,255,0.45)"></div>
<div class="a" style="left:1177px;top:10px;width:12px;height:5px;background:#fff;border:1px solid #3a4150;border-radius:1px"></div>
<div class="a" style="left:1204px;top:5px;width:12px;height:10px;background:#7c9fd4;border:2px solid #fff;box-shadow:0 0 0 1px #3a4150"></div>
<svg class="a" style="left:1241px;top:4.5px" width="13" height="11"><path d="M1 0.5h3.5l2 2.5l2 -2.5h3.5l-3.8 4.8l3.8 4.8h-3.5l-2 -2.5l-2 2.5h-3.5l3.8 -4.8z" fill="#fff" stroke="#3a3a48" stroke-width="1"/></svg>
<div class="a" style="left:1161px;top:88px;width:30px;height:17px;background:linear-gradient(#d2e1f4 0,#c2d5ee 45%,#a3bcdc 52%,#b3cbe8 100%);border:1px solid #5a6a84;border-radius:3px;box-shadow:inset 0 0 0 1px rgba(255,255,255,0.45)"></div>
<div class="a" style="left:1194px;top:88px;width:30px;height:17px;background:linear-gradient(#d2e1f4 0,#c2d5ee 45%,#a3bcdc 52%,#b3cbe8 100%);border:1px solid #5a6a84;border-radius:3px;box-shadow:inset 0 0 0 1px rgba(255,255,255,0.45)"></div>
<div class="a" style="left:1227px;top:88px;width:30px;height:17px;background:linear-gradient(#eab0a2 0,#dc9484 42%,#c4442c 52%,#cf5c44 80%,#dc8a74 100%);border:1px solid #4a1818;border-radius:3px;box-shadow:inset 0 0 0 1px rgba(255,255,255,0.45)"></div>
<div class="a" style="left:1171px;top:96px;width:12px;height:5px;background:#fff;border:1px solid #3a4150;border-radius:1px"></div>
<div class="a" style="left:1204px;top:92px;width:11px;height:9px;background:#7c9fd4;border:2px solid #fff;box-shadow:0 0 0 1px #3a4150"></div>
<svg class="a" style="left:1236px;top:91px" width="13" height="11"><path d="M1 0.5h3.5l2 2.5l2 -2.5h3.5l-3.8 4.8l3.8 4.8h-3.5l-2 -2.5l-2 2.5h-3.5l3.8 -4.8z" fill="#fff" stroke="#3a3a48" stroke-width="1"/></svg>
</body></html>
